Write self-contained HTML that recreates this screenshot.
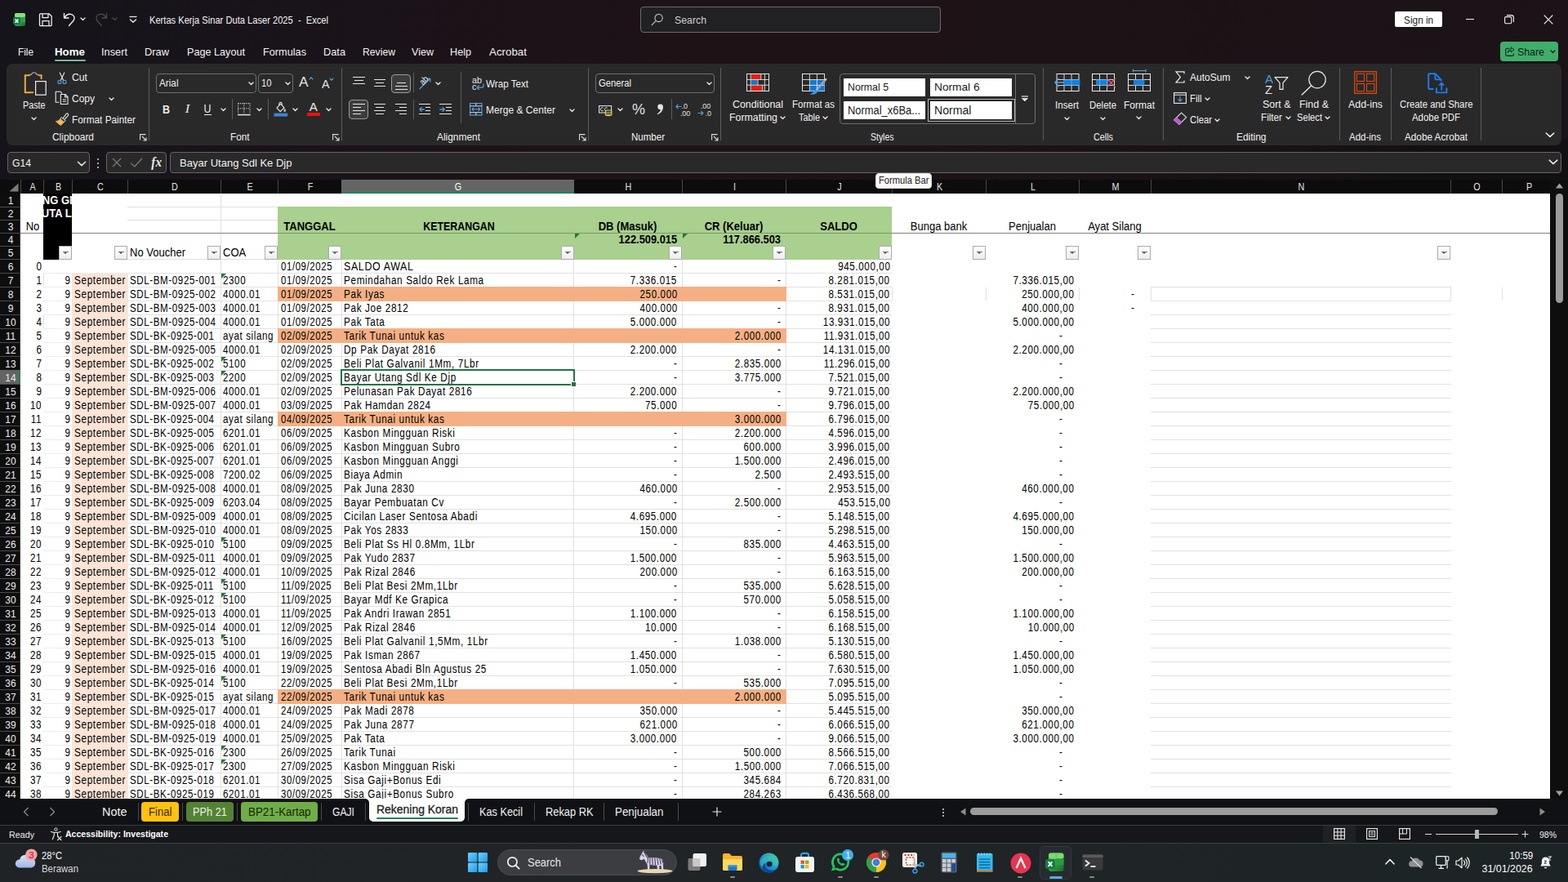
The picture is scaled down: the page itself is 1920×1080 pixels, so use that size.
<!DOCTYPE html>
<html lang="id"><head><meta charset="utf-8"><title>Kertas Kerja Sinar Duta Laser 2025 - Excel</title>
<style>
*{box-sizing:border-box;margin:0;padding:0}
html,body{width:1920px;height:1080px;overflow:hidden;background:#1b1317}
body{position:relative;font-family:'Liberation Sans',sans-serif;font-size:12px;color:#fff}
div,span.t,svg{position:absolute}
span.t{white-space:pre}
svg{overflow:visible}

#g{left:0;top:219px;width:1920px;height:759px;overflow:hidden}
#g div,#g span{position:absolute}
#g .r{left:0;width:1898px;height:17px;font:14px/17px 'Liberation Sans',sans-serif;color:#000;white-space:pre}
#g .r span{top:0;height:17px;letter-spacing:.74px;transform:scaleX(.84);transform-origin:0 0}
#g .r .rh{left:1px;width:24px;text-align:center;color:#ececec;font-size:12.5px;top:1px;letter-spacing:0;transform:scaleX(.96);transform-origin:50% 0}
#g .r .n{transform:scaleX(.83);transform-origin:100% 0}
#g .r .f{transform:scaleX(.815)}
#g .r .d{transform:scaleX(.826)}
#g .r .e{transform:scaleX(.827)}
.a{right:1846.6px}.b{right:1811.8px}.c{left:91.4px}.d{left:159.4px}.e{left:272.8px}.f{left:344.1px}.g{left:421px}
.h{right:1068.6px}.i{right:941.5px}.j{right:807.9px}.l{right:582.5px}.ld{right:596.5px}.m{right:508.3px}
.fb{width:16px;height:16.5px;border:1px solid #ababab;background:linear-gradient(#ffffff,#f6f6f6 55%,#ececec)}
.fb:after{content:"";position:absolute;left:4.5px;top:6.5px;border:2.6px solid transparent;border-top:2.8px solid #4a4a4a;border-bottom:0}
.fb:before{content:"";position:absolute;left:3.5px;top:5.6px;width:7px;height:1px;background:#777}
.tr{width:0;height:0;border-top:6px solid #217a3c;border-right:6px solid transparent}
.ct{height:17px;white-space:pre;font:14px/17px 'Liberation Sans',sans-serif;color:#000}
</style></head>
<body>
<div style="left:0px;top:0px;width:1920px;height:178px;background:linear-gradient(90deg,#15141a 0%,#19131a 18%,#1e1216 45%,#1d1216 70%,#1b1318 100%);"></div>
<div style="left:0px;top:170px;width:1920px;height:50px;background:linear-gradient(90deg,#16141a 0%,#1a1319 22%,#1e1318 42%,#1d1317 58%,#181215 78%,#131012 92%,#121012 100%);"></div>
<svg style="left:16px;top:16px;" width="16" height="16" viewBox="0 0 16 16"><defs><linearGradient id="xg" x1="0" y1="0" x2="1" y2="1"><stop offset="0" stop-color="#6fd66a"/><stop offset="1" stop-color="#0e6b2e"/></linearGradient></defs>
<rect x="2" y="0" width="13" height="16" rx="2.5" fill="url(#xg)"/><rect x="2" y="0" width="13" height="5" rx="2" fill="#8be07a"/><rect x="8" y="5" width="7" height="6" fill="#2fa34a"/>
<rect x="0" y="5" width="9" height="9" rx="1.8" fill="#107c41"/><path d="M2.6 7.4 L6.4 11.8 M6.4 7.4 L2.6 11.8" stroke="#fff" stroke-width="1.5"/></svg>
<svg style="left:48px;top:16px;" width="16" height="16" viewBox="0 0 16 16"><path d="M1.5 0.8h10.5l3.2 3.2v10.5a1 1 0 0 1-1 1h-12.7a1 1 0 0 1-1-1v-12.7a1 1 0 0 1 1-1z M4 0.8v4.7h7v-4.7 M4 15.5v-6h8v6" fill="none" stroke="#f2f2f2" stroke-width="1.25" stroke-linejoin="round"/></svg>
<svg style="left:77px;top:15px;" width="16" height="18" viewBox="0 0 16 18"><path d="M1.5 1.5v5.5h5.5 M1.8 6.8 C4 3.2 7.5 1.6 10.6 2.6 C14 3.8 15 7.2 13.2 10 L7.5 16.5" fill="none" stroke="#f2f2f2" stroke-width="1.35" stroke-linecap="round" stroke-linejoin="round"/></svg>
<svg style="left:97.0px;top:20.25px;" width="9.0" height="6.5" viewBox="0 0 9.0 6.5"><path d="M2 2 L4.5 4.5 L7.0 2" fill="none" stroke="#e0e0e0" stroke-width="1.4" stroke-linecap="round" stroke-linejoin="round"/></svg>
<svg style="left:116px;top:15px;" width="16" height="18" viewBox="0 0 16 18"><path d="M14.5 1.5v5.5h-5.5 M14.2 6.8 C12 3.2 8.5 1.6 5.4 2.6 C2 3.8 1 7.2 2.8 10 L8.5 16.5" fill="none" stroke="#4a474c" stroke-width="1.35" stroke-linecap="round" stroke-linejoin="round"/></svg>
<svg style="left:136.0px;top:20.25px;" width="9.0" height="6.5" viewBox="0 0 9.0 6.5"><path d="M2 2 L4.5 4.5 L7.0 2" fill="none" stroke="#4a474c" stroke-width="1.4" stroke-linecap="round" stroke-linejoin="round"/></svg>
<svg style="left:158px;top:19px;" width="10" height="10" viewBox="0 0 10 10"><path d="M0.5 1.5h9" stroke="#e8e8e8" stroke-width="1.3"/><path d="M1.5 5 L5 8.3 L8.5 5" fill="none" stroke="#e8e8e8" stroke-width="1.4" stroke-linecap="round" stroke-linejoin="round"/></svg>
<span class="t" style="left:183.00px;top:16.00px;font-size:12.5px;line-height:18px;color:#f4f4f4;transform:scaleX(0.8904);transform-origin:0 50%;">Kertas Kerja Sinar Duta Laser 2025  -  Excel</span>
<div style="left:784px;top:8px;width:368px;height:32px;background:#212022;border:1px solid #6c6a6c;border-radius:4px;"></div>
<svg style="left:797px;top:16px;" width="16" height="16" viewBox="0 0 16 16"><circle cx="9.6" cy="6" r="4.6" fill="none" stroke="#bdbdbd" stroke-width="1.2"/><path d="M6.3 9.4 L1.2 14.6" stroke="#bdbdbd" stroke-width="1.3" stroke-linecap="round"/></svg>
<span class="t" style="left:826.00px;top:16.00px;font-size:12.5px;line-height:18px;color:#d0d0d0;transform:scaleX(0.9846);transform-origin:0 50%;">Search</span>
<div style="left:1708px;top:14px;width:58px;height:19px;background:#ffffff;border-radius:2px;"></div>
<span class="t" style="left:1717.88px;top:15.60px;font-size:12.5px;line-height:18px;color:#1a1a1a;transform:scaleX(0.9416);transform-origin:50% 50%;">Sign in</span>
<div style="left:1795px;top:23px;width:10px;height:1px;background:#f0f0f0;"></div>
<svg style="left:1842px;top:18px;" width="12" height="12" viewBox="0 0 12 12"><rect x="0.6" y="2.6" width="8.2" height="8.2" rx="1.5" fill="none" stroke="#f0f0f0" stroke-width="1.1"/><path d="M3 0.6h5.5a2.9 2.9 0 0 1 2.9 2.9v5.5" fill="none" stroke="#f0f0f0" stroke-width="1.1"/></svg>
<svg style="left:1890px;top:18px;" width="12" height="12" viewBox="0 0 12 12"><path d="M0.7 0.7 L11.3 11.3 M11.3 0.7 L0.7 11.3" stroke="#f0f0f0" stroke-width="1.2"/></svg>
<span class="t" style="left:22.00px;top:53.50px;font-size:13.5px;line-height:19px;color:#f2f2f2;transform:scaleX(0.8729);transform-origin:0 50%;">File</span>
<span class="t" style="left:124.00px;top:53.50px;font-size:13.5px;line-height:19px;color:#f2f2f2;transform:scaleX(0.9477);transform-origin:0 50%;">Insert</span>
<span class="t" style="left:177.00px;top:53.50px;font-size:13.5px;line-height:19px;color:#f2f2f2;transform:scaleX(0.9519);transform-origin:0 50%;">Draw</span>
<span class="t" style="left:229.00px;top:53.50px;font-size:13.5px;line-height:19px;color:#f2f2f2;transform:scaleX(0.9365);transform-origin:0 50%;">Page Layout</span>
<span class="t" style="left:322.00px;top:53.50px;font-size:13.5px;line-height:19px;color:#f2f2f2;transform:scaleX(0.9420);transform-origin:0 50%;">Formulas</span>
<span class="t" style="left:396.00px;top:53.50px;font-size:13.5px;line-height:19px;color:#f2f2f2;transform:scaleX(0.9463);transform-origin:0 50%;">Data</span>
<span class="t" style="left:444.00px;top:53.50px;font-size:13.5px;line-height:19px;color:#f2f2f2;transform:scaleX(0.9036);transform-origin:0 50%;">Review</span>
<span class="t" style="left:504.00px;top:53.50px;font-size:13.5px;line-height:19px;color:#f2f2f2;transform:scaleX(0.9300);transform-origin:0 50%;">View</span>
<span class="t" style="left:551.00px;top:53.50px;font-size:13.5px;line-height:19px;color:#f2f2f2;transform:scaleX(0.9364);transform-origin:0 50%;">Help</span>
<span class="t" style="left:599.00px;top:53.50px;font-size:13.5px;line-height:19px;color:#f2f2f2;transform:scaleX(0.9886);transform-origin:0 50%;">Acrobat</span>
<span class="t" style="left:67.00px;top:53.50px;font-size:13.5px;line-height:19px;color:#ffffff;font-weight:700;transform:scaleX(0.9863);transform-origin:0 50%;">Home</span>
<div style="left:67px;top:73px;width:38px;height:2.2px;background:#6dbb97;border-radius:1px;"></div>
<div style="left:1837px;top:51px;width:71px;height:24px;background:#41ad6b;border-radius:4px;"></div>
<svg style="left:1843px;top:57px;" width="12" height="12" viewBox="0 0 12 12"><path d="M5 2.2H2.2a1.4 1.4 0 0 0-1.4 1.4v6.4a1.4 1.4 0 0 0 1.4 1.4h6.8a1.4 1.4 0 0 0 1.4-1.4V8.4" fill="none" stroke="#0c2414" stroke-width="1.1"/><path d="M7.6 0.9 L11 3.9 L7.6 6.9 V5 C5.4 5 4.2 5.9 3.4 7.6 C3.6 4.7 5 3 7.6 2.8Z" fill="none" stroke="#0c2414" stroke-width="1" stroke-linejoin="round"/></svg>
<span class="t" style="left:1858.00px;top:53.50px;font-size:13.5px;line-height:19px;color:#0c2414;transform:scaleX(0.9159);transform-origin:0 50%;">Share</span>
<svg style="left:1896.5px;top:60.25px;" width="9.0" height="6.5" viewBox="0 0 9.0 6.5"><path d="M2 2 L4.5 4.5 L7.0 2" fill="none" stroke="#0c2414" stroke-width="1.2" stroke-linecap="round" stroke-linejoin="round"/></svg>
<div style="left:8px;top:78px;width:1904px;height:100px;background:#292929;border-radius:8px;"></div>
<svg style="left:28px;top:86px;" width="30" height="33" viewBox="0 0 30 33"><path d="M8.5 6.5 V5.3h2a3.3 3.3 0 0 1 6.4 0h2V6.5" fill="none" stroke="#b9b9b9" stroke-width="1.1"/>
<path d="M8.3 6.2H2.8V27.2H13 M19.2 6.2H22.6V11" fill="none" stroke="#f3a73b" stroke-width="2"/>
<rect x="15.6" y="13.6" width="12.6" height="16.6" fill="#292929" stroke="#eeeeee" stroke-width="1.2"/></svg>
<span class="t" style="left:27.50px;top:120.00px;font-size:12.5px;line-height:18px;color:#f2f2f2;transform:scaleX(0.8602);transform-origin:0 50%;">Paste</span>
<svg style="left:36.5px;top:141.75px;" width="9.0" height="6.5" viewBox="0 0 9.0 6.5"><path d="M2 2 L4.5 4.5 L7.0 2" fill="none" stroke="#e6e6e6" stroke-width="1.4" stroke-linecap="round" stroke-linejoin="round"/></svg>
<svg style="left:69px;top:88px;" width="14" height="16" viewBox="0 0 14 16"><path d="M4.2 1 L8.6 10.3 M9.8 1 L5.4 10.3" stroke="#e8e8e8" stroke-width="1.1" stroke-linecap="round"/>
<circle cx="3.9" cy="12.4" r="2" fill="none" stroke="#4a9fe0" stroke-width="1.1"/><circle cx="10.1" cy="12.4" r="2" fill="none" stroke="#4a9fe0" stroke-width="1.1"/></svg>
<span class="t" style="left:88.00px;top:86.00px;font-size:12.5px;line-height:18px;color:#f2f2f2;transform:scaleX(0.9767);transform-origin:0 50%;">Cut</span>
<svg style="left:67px;top:111px;" width="18" height="18" viewBox="0 0 18 18"><path d="M5.3 14.3H1.2V1.2H6.8L9 3.4" fill="none" stroke="#e8e8e8" stroke-width="1.1" stroke-linejoin="round"/>
<path d="M7.3 4.5h5.6l3.1 3.1v8.9H7.3z M12.6 4.6v3.3h3.3" fill="none" stroke="#e8e8e8" stroke-width="1.1" stroke-linejoin="round"/>
<path d="M9.8 11h4 M9.8 13.3h4" stroke="#e8e8e8" stroke-width="1"/></svg>
<span class="t" style="left:88.00px;top:112.00px;font-size:12.5px;line-height:18px;color:#f2f2f2;transform:scaleX(0.9593);transform-origin:0 50%;">Copy</span>
<svg style="left:131.8px;top:117.75px;" width="9.0" height="6.5" viewBox="0 0 9.0 6.5"><path d="M2 2 L4.5 4.5 L7.0 2" fill="none" stroke="#e6e6e6" stroke-width="1.4" stroke-linecap="round" stroke-linejoin="round"/></svg>
<svg style="left:67px;top:138px;" width="18" height="17" viewBox="0 0 18 17"><path d="M10.3 6.6 L14.2 1.4 a1.5 1.5 0 0 1 2.3 1.9 L12.2 8.2" fill="none" stroke="#e8e8e8" stroke-width="1.1"/>
<path d="M8.2 5.6 L13.2 9.5 L11.4 11.6 L6.6 7.8Z" fill="#3a3a3a" stroke="#e8e8e8" stroke-width="1"/>
<path d="M6.3 8.2 L11 11.9 L7.3 15.6 L1.2 10.6 C3.4 10.4 5 9.6 6.3 8.2Z" fill="#f0bd4f" stroke="#f0bd4f" stroke-width="0.8" stroke-linejoin="round"/></svg>
<span class="t" style="left:88.00px;top:138.00px;font-size:12.5px;line-height:18px;color:#f2f2f2;transform:scaleX(0.9435);transform-origin:0 50%;">Format Painter</span>
<span class="t" style="left:64.00px;top:159.50px;font-size:12px;line-height:17px;color:#f2f2f2;transform:scaleX(0.9927);transform-origin:0 50%;">Clipboard</span>
<svg style="left:171px;top:164px;" width="9" height="9" viewBox="0 0 9 9"><path d="M7.5 0.6H0.6V7.5" fill="none" stroke="#dcdcdc" stroke-width="1.1"/><path d="M3 3 L8 8 M8 4.3V8H4.3" fill="none" stroke="#dcdcdc" stroke-width="1.1"/></svg>
<div style="left:182px;top:83px;width:1px;height:89px;background:#5c5c5c;"></div>
<div style="left:191px;top:90px;width:123px;height:24px;background:#292929;border:1px solid #6e6e6e;border-radius:4px;"></div>
<span class="t" style="left:194.50px;top:93.00px;font-size:12.5px;line-height:18px;color:#f2f2f2;transform:scaleX(0.9394);transform-origin:0 50%;">Arial</span>
<svg style="left:303.0px;top:99.25px;" width="9.0" height="6.5" viewBox="0 0 9.0 6.5"><path d="M2 2 L4.5 4.5 L7.0 2" fill="none" stroke="#e6e6e6" stroke-width="1.4" stroke-linecap="round" stroke-linejoin="round"/></svg>
<div style="left:316px;top:90px;width:43px;height:24px;background:#292929;border:1px solid #6e6e6e;border-radius:4px;"></div>
<span class="t" style="left:319.50px;top:93.00px;font-size:12.5px;line-height:18px;color:#f2f2f2;transform:scaleX(0.8989);transform-origin:0 50%;">10</span>
<svg style="left:348.0px;top:99.25px;" width="9.0" height="6.5" viewBox="0 0 9.0 6.5"><path d="M2 2 L4.5 4.5 L7.0 2" fill="none" stroke="#e6e6e6" stroke-width="1.4" stroke-linecap="round" stroke-linejoin="round"/></svg>
<span class="t" style="left:366.00px;top:89.00px;font-size:17px;line-height:24px;color:#e4e4e4;transform:scaleX(1.0138);transform-origin:0 50%;">A</span>
<svg style="left:378px;top:94px;" width="6" height="4" viewBox="0 0 6 4"><path d="M0.7 3.3 L3 0.9 L5.3 3.3" fill="none" stroke="#5aa7e6" stroke-width="1.1"/></svg>
<span class="t" style="left:394.00px;top:92.50px;font-size:14.5px;line-height:20px;color:#e4e4e4;transform:scaleX(0.9822);transform-origin:0 50%;">A</span>
<svg style="left:403px;top:95px;" width="6" height="4" viewBox="0 0 6 4"><path d="M0.7 0.8 L3 3.2 L5.3 0.8" fill="none" stroke="#5aa7e6" stroke-width="1.1"/></svg>
<span class="t" style="left:197.58px;top:123.00px;font-size:15px;line-height:21px;color:#ececec;font-weight:700;transform:scaleX(0.8300);transform-origin:50% 50%;">B</span>
<span class="t" style="left:226.50px;top:123.00px;font-size:15px;line-height:21px;color:#ececec;font-style:italic;font-family:'Liberation Serif',serif;transform:scaleX(1.1000);transform-origin:50% 50%;">I</span>
<span class="t" style="left:248.94px;top:122.50px;font-size:14px;line-height:20px;color:#ececec;transform:scaleX(0.8889);transform-origin:50% 50%;">U</span>
<div style="left:249.5px;top:139.5px;width:9.5px;height:1.2px;background:#ececec;"></div>
<svg style="left:268.8px;top:131.25px;" width="9.0" height="6.5" viewBox="0 0 9.0 6.5"><path d="M2 2 L4.5 4.5 L7.0 2" fill="none" stroke="#e6e6e6" stroke-width="1.4" stroke-linecap="round" stroke-linejoin="round"/></svg>
<div style="left:284px;top:121px;width:1px;height:25px;background:#5c5c5c;"></div>
<svg style="left:291px;top:126px;" width="16" height="16" viewBox="0 0 16 16"><path d="M0.6 0.6H15 M0.6 0.6V13 M15 0.6V13 M7.8 0.6V13 M0.6 6.8H15" fill="none" stroke="#dcdcdc" stroke-width="1.1" stroke-dasharray="1.1 1.3"/><path d="M0 14.6H15.6" stroke="#f0f0f0" stroke-width="1.4"/></svg>
<svg style="left:313.0px;top:131.25px;" width="9.0" height="6.5" viewBox="0 0 9.0 6.5"><path d="M2 2 L4.5 4.5 L7.0 2" fill="none" stroke="#e6e6e6" stroke-width="1.4" stroke-linecap="round" stroke-linejoin="round"/></svg>
<div style="left:328px;top:121px;width:1px;height:25px;background:#5c5c5c;"></div>
<svg style="left:335px;top:124px;" width="18" height="19" viewBox="0 0 18 19"><path d="M4 8.2 L8.6 3.2 L13 7.8 L8.2 12.6Z" fill="none" stroke="#e8e8e8" stroke-width="1.2" stroke-linejoin="round"/><path d="M6.9 4.9 C6.4 2.6 7.3 1.2 8.6 1.2 C9.8 1.2 10.3 2.4 10.2 4.6" fill="none" stroke="#e8e8e8" stroke-width="1.1"/><path d="M13.6 8.6c1 1.6 1.4 2.5 1.4 3.2a1.3 1.3 0 0 1-2.6 0c0-.8.4-1.7 1.2-3.2z" fill="#bdbdbd"/><rect x="0.4" y="14.6" width="16.8" height="4" fill="#3b86d6"/></svg>
<svg style="left:356.8px;top:131.25px;" width="9.0" height="6.5" viewBox="0 0 9.0 6.5"><path d="M2 2 L4.5 4.5 L7.0 2" fill="none" stroke="#e6e6e6" stroke-width="1.4" stroke-linecap="round" stroke-linejoin="round"/></svg>
<span class="t" style="left:379.36px;top:121.00px;font-size:14.5px;line-height:20px;color:#ececec;transform:scaleX(1.0339);transform-origin:50% 50%;">A</span>
<div style="left:376px;top:138.3px;width:16px;height:4px;background:#ee1111;"></div>
<svg style="left:398.0px;top:131.25px;" width="9.0" height="6.5" viewBox="0 0 9.0 6.5"><path d="M2 2 L4.5 4.5 L7.0 2" fill="none" stroke="#e6e6e6" stroke-width="1.4" stroke-linecap="round" stroke-linejoin="round"/></svg>
<span class="t" style="left:281.50px;top:159.50px;font-size:12px;line-height:17px;color:#f2f2f2;transform:scaleX(0.9785);transform-origin:0 50%;">Font</span>
<svg style="left:407px;top:164px;" width="9" height="9" viewBox="0 0 9 9"><path d="M7.5 0.6H0.6V7.5" fill="none" stroke="#dcdcdc" stroke-width="1.1"/><path d="M3 3 L8 8 M8 4.3V8H4.3" fill="none" stroke="#dcdcdc" stroke-width="1.1"/></svg>
<div style="left:418px;top:83px;width:1px;height:89px;background:#5c5c5c;"></div>
<div style="left:432px;top:94px;width:14.5px;height:1.2px;background:#e6e6e6;"></div>
<div style="left:434px;top:98px;width:10.5px;height:1.2px;background:#e6e6e6;"></div>
<div style="left:432px;top:102px;width:14.5px;height:1.2px;background:#e6e6e6;"></div>
<div style="left:457.5px;top:97px;width:14.5px;height:1.2px;background:#e6e6e6;"></div>
<div style="left:459.5px;top:101px;width:10.5px;height:1.2px;background:#e6e6e6;"></div>
<div style="left:457.5px;top:105px;width:14.5px;height:1.2px;background:#e6e6e6;"></div>
<div style="left:479px;top:90.5px;width:24px;height:23.5px;background:#3d3d3d;border:1px solid #9a9a9a;border-radius:4px;"></div>
<div style="left:486px;top:101px;width:10.5px;height:1.2px;background:#e6e6e6;"></div>
<div style="left:484px;top:105px;width:14.5px;height:1.2px;background:#e6e6e6;"></div>
<div style="left:484px;top:109px;width:14.5px;height:1.2px;background:#e6e6e6;"></div>
<div style="left:505.5px;top:89px;width:1px;height:24px;background:#5c5c5c;"></div>
<svg style="left:511px;top:92px;" width="18" height="19" viewBox="0 0 18 19"><path d="M2.5 17 L15.5 4.5 M15.8 4.2h-4.4 M15.8 4.2v4.4" fill="none" stroke="#4a9fe0" stroke-width="1.3"/></svg>
<span class="t" style="left:512.88px;top:91.00px;font-size:11px;line-height:15px;color:#e8e8e8;transform:scaleX(0.8500);transform-origin:50% 50%;transform:rotate(-45deg) scaleX(0.85);transform-origin:50% 50%;">ab</span>
<svg style="left:532.0px;top:99.25px;" width="9.0" height="6.5" viewBox="0 0 9.0 6.5"><path d="M2 2 L4.5 4.5 L7.0 2" fill="none" stroke="#e6e6e6" stroke-width="1.4" stroke-linecap="round" stroke-linejoin="round"/></svg>
<div style="left:427px;top:122px;width:24px;height:23.5px;background:#3d3d3d;border:1px solid #9a9a9a;border-radius:4px;"></div>
<div style="left:432px;top:127px;width:14.5px;height:1.2px;background:#e6e6e6;"></div>
<div style="left:432px;top:131px;width:9.5px;height:1.2px;background:#e6e6e6;"></div>
<div style="left:432px;top:135px;width:14.5px;height:1.2px;background:#e6e6e6;"></div>
<div style="left:432px;top:139px;width:9.5px;height:1.2px;background:#e6e6e6;"></div>
<div style="left:457.5px;top:127px;width:14.5px;height:1.2px;background:#e6e6e6;"></div>
<div style="left:459.5px;top:131px;width:10.5px;height:1.2px;background:#e6e6e6;"></div>
<div style="left:457.5px;top:135px;width:14.5px;height:1.2px;background:#e6e6e6;"></div>
<div style="left:459.5px;top:139px;width:10.5px;height:1.2px;background:#e6e6e6;"></div>
<div style="left:483.5px;top:127px;width:14.5px;height:1.2px;background:#e6e6e6;"></div>
<div style="left:488.5px;top:131px;width:9.5px;height:1.2px;background:#e6e6e6;"></div>
<div style="left:483.5px;top:135px;width:14.5px;height:1.2px;background:#e6e6e6;"></div>
<div style="left:488.5px;top:139px;width:9.5px;height:1.2px;background:#e6e6e6;"></div>
<div style="left:505.5px;top:122px;width:1px;height:24px;background:#5c5c5c;"></div>
<div style="left:512.5px;top:127px;width:14.5px;height:1.2px;background:#e6e6e6;"></div>
<div style="left:512.5px;top:139px;width:14.5px;height:1.2px;background:#e6e6e6;"></div>
<div style="left:520.5px;top:131px;width:6.5px;height:1.2px;background:#e6e6e6;"></div>
<div style="left:520.5px;top:135px;width:6.5px;height:1.2px;background:#e6e6e6;"></div>
<svg style="left:512.5px;top:129.5px;" width="8" height="8" viewBox="0 0 8 8"><path d="M6.8 4H1 M3.4 1.4 L0.9 4 L3.4 6.6" fill="none" stroke="#4a9fe0" stroke-width="1.3" stroke-linejoin="round"/></svg>
<div style="left:538px;top:127px;width:14.5px;height:1.2px;background:#e6e6e6;"></div>
<div style="left:538px;top:139px;width:14.5px;height:1.2px;background:#e6e6e6;"></div>
<div style="left:546px;top:131px;width:6.5px;height:1.2px;background:#e6e6e6;"></div>
<div style="left:546px;top:135px;width:6.5px;height:1.2px;background:#e6e6e6;"></div>
<svg style="left:538px;top:129.5px;" width="8" height="8" viewBox="0 0 8 8"><path d="M0.4 4H6.2 M3.8 1.4 L6.3 4 L3.8 6.6" fill="none" stroke="#4a9fe0" stroke-width="1.3" stroke-linejoin="round"/></svg>
<div style="left:564px;top:88px;width:1px;height:63px;background:#5c5c5c;"></div>
<span class="t" style="left:578.00px;top:90.50px;font-size:10.5px;line-height:15px;color:#e8e8e8;transform:scaleX(1.0267);transform-origin:0 50%;">ab</span>
<span class="t" style="left:578.00px;top:99.00px;font-size:10.5px;line-height:15px;color:#e8e8e8;transform:scaleX(1.0476);transform-origin:0 50%;">c</span>
<svg style="left:583px;top:102px;" width="10" height="9" viewBox="0 0 10 9"><path d="M9 0.5v2.6a2 2 0 0 1-2 2H1.2 M3.8 2.2 L1 5.1 L3.8 8" fill="none" stroke="#4a9fe0" stroke-width="1.3" stroke-linejoin="round"/></svg>
<span class="t" style="left:595.00px;top:94.00px;font-size:12.5px;line-height:18px;color:#f2f2f2;transform:scaleX(0.9317);transform-origin:0 50%;">Wrap Text</span>
<svg style="left:575px;top:126px;" width="16" height="16" viewBox="0 0 16 16"><rect x="0.6" y="0.6" width="14.4" height="14.4" fill="none" stroke="#5aa7e6" stroke-width="1.1"/><path d="M0.6 3.9H15 M0.6 11.7H15 M7.8 0.6V3.9 M7.8 11.7V15" stroke="#cfe3f5" stroke-width="1"/><path d="M3 7.8H12.6 M5 5.8 L3 7.8 L5 9.8 M10.6 5.8 L12.6 7.8 L10.6 9.8" fill="none" stroke="#5aa7e6" stroke-width="1.1"/></svg>
<span class="t" style="left:595.00px;top:126.00px;font-size:12.5px;line-height:18px;color:#f2f2f2;transform:scaleX(0.9633);transform-origin:0 50%;">Merge &amp; Center</span>
<svg style="left:695.8px;top:131.75px;" width="9.0" height="6.5" viewBox="0 0 9.0 6.5"><path d="M2 2 L4.5 4.5 L7.0 2" fill="none" stroke="#e6e6e6" stroke-width="1.4" stroke-linecap="round" stroke-linejoin="round"/></svg>
<span class="t" style="left:535.00px;top:159.50px;font-size:12px;line-height:17px;color:#f2f2f2;transform:scaleX(0.9930);transform-origin:0 50%;">Alignment</span>
<svg style="left:709px;top:164px;" width="9" height="9" viewBox="0 0 9 9"><path d="M7.5 0.6H0.6V7.5" fill="none" stroke="#dcdcdc" stroke-width="1.1"/><path d="M3 3 L8 8 M8 4.3V8H4.3" fill="none" stroke="#dcdcdc" stroke-width="1.1"/></svg>
<div style="left:720px;top:83px;width:1px;height:89px;background:#5c5c5c;"></div>
<div style="left:729px;top:90px;width:146px;height:24px;background:#292929;border:1px solid #6e6e6e;border-radius:4px;"></div>
<span class="t" style="left:732.50px;top:93.00px;font-size:12.5px;line-height:18px;color:#f2f2f2;transform:scaleX(0.8992);transform-origin:0 50%;">General</span>
<svg style="left:863.5px;top:99.25px;" width="9.0" height="6.5" viewBox="0 0 9.0 6.5"><path d="M2 2 L4.5 4.5 L7.0 2" fill="none" stroke="#e6e6e6" stroke-width="1.4" stroke-linecap="round" stroke-linejoin="round"/></svg>
<svg style="left:733px;top:129px;" width="17" height="14" viewBox="0 0 17 14"><rect x="0.6" y="0.6" width="15" height="8.4" fill="none" stroke="#e0e0e0" stroke-width="1.1"/><path d="M5.6 3.2a2 2 0 1 0 0 3.2 M10.6 3.2a2 2 0 1 0 0 3.2" fill="none" stroke="#e0e0e0" stroke-width="1"/>
<path d="M8.4 6.8c0-1.1 7.4-1.1 7.4 0v5c0 1.1-7.4 1.1-7.4 0z" fill="#292929" stroke="#ecd66a" stroke-width="1.1"/><path d="M8.4 8.2c0 1 7.4 1 7.4 0 M8.4 10.4c0 1 7.4 1 7.4 0" fill="none" stroke="#ecd66a" stroke-width="1"/></svg>
<svg style="left:754.8px;top:131.25px;" width="9.0" height="6.5" viewBox="0 0 9.0 6.5"><path d="M2 2 L4.5 4.5 L7.0 2" fill="none" stroke="#e6e6e6" stroke-width="1.4" stroke-linecap="round" stroke-linejoin="round"/></svg>
<span class="t" style="left:773.99px;top:122.00px;font-size:18px;line-height:25px;color:#e0e0e0;">%</span>
<svg style="left:804px;top:127px;" width="9" height="14" viewBox="0 0 9 14"><path d="M4.6 0.6a3.4 3.4 0 0 1 3.4 3.5c0 4.1-2.6 7.6-6.6 9.1l-.5-1c2.4-1.3 3.8-3 4-5.1A3.4 3.4 0 0 1 1.2 4 3.4 3.4 0 0 1 4.6.6z" fill="#e4e4e4"/></svg>
<div style="left:822px;top:121px;width:1px;height:25px;background:#5c5c5c;"></div>
<span class="t" style="left:833.56px;top:123.00px;font-size:9.5px;line-height:13px;color:#e0e0e0;transform:scaleX(0.9500);transform-origin:100% 50%;">.0</span>
<span class="t" style="left:831.78px;top:131.50px;font-size:9.5px;line-height:13px;color:#e0e0e0;transform:scaleX(0.9500);transform-origin:100% 50%;">.00</span>
<svg style="left:827px;top:126.5px;" width="8" height="7" viewBox="0 0 8 7"><path d="M7.4 3.5H1 M3.4 1 L0.9 3.5 L3.4 6" fill="none" stroke="#4a9fe0" stroke-width="1.2"/></svg>
<span class="t" style="left:857.28px;top:123.00px;font-size:9.5px;line-height:13px;color:#e0e0e0;transform:scaleX(0.9500);transform-origin:100% 50%;">.00</span>
<span class="t" style="left:862.56px;top:131.50px;font-size:9.5px;line-height:13px;color:#e0e0e0;transform:scaleX(0.9500);transform-origin:100% 50%;">.0</span>
<svg style="left:853.5px;top:135px;" width="8" height="7" viewBox="0 0 8 7"><path d="M0.4 3.5H6.8 M4.4 1 L6.9 3.5 L4.4 6" fill="none" stroke="#4a9fe0" stroke-width="1.2"/></svg>
<span class="t" style="left:773.00px;top:159.50px;font-size:12px;line-height:17px;color:#f2f2f2;transform:scaleX(0.9605);transform-origin:0 50%;">Number</span>
<svg style="left:870.5px;top:164px;" width="9" height="9" viewBox="0 0 9 9"><path d="M7.5 0.6H0.6V7.5" fill="none" stroke="#dcdcdc" stroke-width="1.1"/><path d="M3 3 L8 8 M8 4.3V8H4.3" fill="none" stroke="#dcdcdc" stroke-width="1.1"/></svg>
<div style="left:882px;top:83px;width:1px;height:89px;background:#5c5c5c;"></div>
<svg style="left:914px;top:90px;" width="28" height="22" viewBox="0 0 28 22"><rect x="0.5" y="0.5" width="27" height="21" fill="#292929" stroke="#e4e4e4" stroke-width="1"/>
<rect x="5.6" y="1" width="12" height="6.3" fill="#ea1c14"/><rect x="5.6" y="7.8" width="8" height="6" fill="#1279d2"/><rect x="5.6" y="14.4" width="14" height="6.6" fill="#ea1c14"/>
<path d="M5.2 0.5V21.5 M22.4 0.5V21.5 M0.5 7.5H27.5 M0.5 14.2H27.5 M14 7.5v7 M17.8 0.5v7 M19.8 14.2v7" stroke="#e4e4e4" stroke-width="0.9" fill="none"/></svg>
<span class="t" style="left:897.00px;top:119.00px;font-size:12.5px;line-height:18px;color:#f2f2f2;transform:scaleX(0.9913);transform-origin:0 50%;">Conditional</span>
<span class="t" style="left:893.00px;top:135.00px;font-size:12.5px;line-height:18px;color:#f2f2f2;transform:scaleX(0.9874);transform-origin:0 50%;">Formatting</span>
<svg style="left:954.0px;top:141.25px;" width="9.0" height="6.5" viewBox="0 0 9.0 6.5"><path d="M2 2 L4.5 4.5 L7.0 2" fill="none" stroke="#e6e6e6" stroke-width="1.4" stroke-linecap="round" stroke-linejoin="round"/></svg>
<svg style="left:982px;top:90px;" width="32" height="30" viewBox="0 0 32 30"><rect x="0.5" y="0.5" width="27" height="21" fill="#292929" stroke="#e4e4e4" stroke-width="1"/>
<rect x="9.6" y="7.8" width="18" height="13.4" fill="#1279d2"/>
<path d="M9.4 0.5V21.5 M18.4 0.5V21.5 M0.5 7.5H27.5 M0.5 14.4H27.5" stroke="#e4e4e4" stroke-width="0.9"/>
<path d="M29.3 7.2 L17.6 20.6" stroke="#d9d9d9" stroke-width="2.2" stroke-linecap="round"/><path d="M28.6 8.2 L19 19.2" stroke="#8a5a3a" stroke-width="1" />
<path d="M17.8 19.4 L19.6 21.4 C18.6 24.6 14.4 26.6 9.8 25.4 C12.6 24.2 14.4 21.6 17.8 19.4Z" fill="#3a96e8"/></svg>
<span class="t" style="left:970.00px;top:119.00px;font-size:12.5px;line-height:18px;color:#f2f2f2;transform:scaleX(0.9242);transform-origin:0 50%;">Format as</span>
<span class="t" style="left:978.00px;top:135.00px;font-size:12.5px;line-height:18px;color:#f2f2f2;transform:scaleX(0.8698);transform-origin:0 50%;">Table</span>
<svg style="left:1006.0px;top:141.25px;" width="9.0" height="6.5" viewBox="0 0 9.0 6.5"><path d="M2 2 L4.5 4.5 L7.0 2" fill="none" stroke="#e6e6e6" stroke-width="1.4" stroke-linecap="round" stroke-linejoin="round"/></svg>
<div style="left:1028px;top:90px;width:239.5px;height:62px;background:#292929;border:1px solid #6e6e6e;border-radius:4px;"></div>
<div style="left:1243px;top:90px;width:1px;height:62px;background:#6e6e6e;"></div>
<div style="left:1033px;top:96px;width:100px;height:22px;background:#ffffff;"></div>
<div style="left:1139px;top:96px;width:100px;height:22px;background:#ffffff;"></div>
<div style="left:1033px;top:124px;width:100px;height:22px;background:#ffffff;"></div>
<div style="left:1136px;top:121px;width:106.5px;height:28px;background:#2b2b2b;border:1px solid #b0b0b0;"></div>
<div style="left:1139px;top:124px;width:100px;height:22px;background:#ffffff;"></div>
<span class="t" style="left:1037.50px;top:98.00px;font-size:12.5px;line-height:18px;color:#1a1a1a;transform:scaleX(0.9858);transform-origin:0 50%;">Normal 5</span>
<span class="t" style="left:1143.50px;top:97.00px;font-size:13.5px;line-height:19px;color:#1a1a1a;transform:scaleX(1.0134);transform-origin:0 50%;">Normal 6</span>
<span class="t" style="left:1037.50px;top:124.50px;font-size:14px;line-height:20px;color:#1a1a1a;transform:scaleX(0.9224);transform-origin:0 50%;">Normal_x6Ba...</span>
<span class="t" style="left:1143.50px;top:124.50px;font-size:14px;line-height:20px;color:#1a1a1a;transform:scaleX(1.0083);transform-origin:0 50%;">Normal</span>
<svg style="left:1250px;top:116.5px;" width="10" height="8" viewBox="0 0 10 8"><path d="M0.8 1H9" stroke="#e8e8e8" stroke-width="1.2"/><path d="M1.4 3.6 L4.9 6.8 L8.4 3.6Z" fill="#e8e8e8" stroke="#e8e8e8" stroke-width="0.8" stroke-linejoin="round"/></svg>
<span class="t" style="left:1066.00px;top:159.50px;font-size:12px;line-height:17px;color:#f2f2f2;transform:scaleX(0.8719);transform-origin:0 50%;">Styles</span>
<div style="left:1277px;top:83px;width:1px;height:89px;background:#5c5c5c;"></div>
<svg style="left:1291px;top:90px;" width="32" height="22" viewBox="0 0 32 22"><g transform="translate(2.5,0)"><rect x="0.5" y="0.5" width="27" height="21" fill="none" stroke="#ededed" stroke-width="1"/><path d="M9.5 0.5V21.5 M18.5 0.5V21.5 M0.5 7.5H27.5 M0.5 14.5H27.5" stroke="#ededed" stroke-width="0.9"/><rect x="9" y="7.6" width="20" height="6.8" fill="#1581e0"/><path d="M18.5 7.5v7" stroke="#5db0f5" stroke-width="0.8"/></g>
<path d="M12 11H1.2 M5.6 6 L0.9 11 L5.6 16" fill="none" stroke="#5aa7e6" stroke-width="1.3"/></svg>
<span class="t" style="left:1292.00px;top:120.00px;font-size:12.5px;line-height:18px;color:#f2f2f2;transform:scaleX(0.9275);transform-origin:0 50%;">Insert</span>
<svg style="left:1301.8px;top:141.75px;" width="9.0" height="6.5" viewBox="0 0 9.0 6.5"><path d="M2 2 L4.5 4.5 L7.0 2" fill="none" stroke="#e6e6e6" stroke-width="1.4" stroke-linecap="round" stroke-linejoin="round"/></svg>
<svg style="left:1337px;top:90px;" width="32" height="22" viewBox="0 0 32 22"><rect x="0.5" y="0.5" width="27" height="21" fill="none" stroke="#ededed" stroke-width="1"/><path d="M9.5 0.5V21.5 M18.5 0.5V21.5 M0.5 7.5H27.5 M0.5 14.5H27.5" stroke="#ededed" stroke-width="0.9"/><rect x="5" y="7.6" width="15" height="6.8" fill="#1581e0"/><path d="M9.5 7.5v7 M18.5 7.5v7" stroke="#5db0f5" stroke-width="0.8"/>
<path d="M18.2 6 L28.8 17 M28.8 6 L18.2 17" stroke="#e8566e" stroke-width="1.3"/></svg>
<span class="t" style="left:1334.00px;top:120.00px;font-size:12.5px;line-height:18px;color:#f2f2f2;transform:scaleX(0.9131);transform-origin:0 50%;">Delete</span>
<svg style="left:1345.8px;top:141.75px;" width="9.0" height="6.5" viewBox="0 0 9.0 6.5"><path d="M2 2 L4.5 4.5 L7.0 2" fill="none" stroke="#e6e6e6" stroke-width="1.4" stroke-linecap="round" stroke-linejoin="round"/></svg>
<svg style="left:1381px;top:84px;" width="30" height="28" viewBox="0 0 30 28"><path d="M6.5 2.6H22 M6.5 0.6V4.6 M22 0.6V4.6" stroke="#5aa7e6" stroke-width="1" fill="none"/><g transform="translate(0,6)"><rect x="0.5" y="0.5" width="27" height="21" fill="none" stroke="#ededed" stroke-width="1"/><path d="M9.5 0.5V21.5 M18.5 0.5V21.5 M0.5 7.5H27.5 M0.5 14.5H27.5" stroke="#ededed" stroke-width="0.9"/><rect x="7" y="7.6" width="13.4" height="6.8" fill="#1581e0"/></g></svg>
<span class="t" style="left:1376.00px;top:119.50px;font-size:12.5px;line-height:18px;color:#f2f2f2;transform:scaleX(0.9597);transform-origin:0 50%;">Format</span>
<svg style="left:1389.8px;top:140.75px;" width="9.0" height="6.5" viewBox="0 0 9.0 6.5"><path d="M2 2 L4.5 4.5 L7.0 2" fill="none" stroke="#e6e6e6" stroke-width="1.4" stroke-linecap="round" stroke-linejoin="round"/></svg>
<span class="t" style="left:1339.00px;top:159.50px;font-size:12px;line-height:17px;color:#f2f2f2;transform:scaleX(0.8998);transform-origin:0 50%;">Cells</span>
<div style="left:1424px;top:83px;width:1px;height:89px;background:#5c5c5c;"></div>
<svg style="left:1439px;top:87px;" width="12" height="15" viewBox="0 0 12 15"><path d="M11 3.2V0.8H1L6.4 7.4 L1 14H11V11.6" fill="none" stroke="#ececec" stroke-width="1.2" stroke-linejoin="miter"/></svg>
<span class="t" style="left:1457.00px;top:86.00px;font-size:12.5px;line-height:18px;color:#f2f2f2;transform:scaleX(0.9626);transform-origin:0 50%;">AutoSum</span>
<svg style="left:1523.0px;top:92.25px;" width="9.0" height="6.5" viewBox="0 0 9.0 6.5"><path d="M2 2 L4.5 4.5 L7.0 2" fill="none" stroke="#e6e6e6" stroke-width="1.4" stroke-linecap="round" stroke-linejoin="round"/></svg>
<svg style="left:1437px;top:113px;" width="16" height="14" viewBox="0 0 16 14"><rect x="0.6" y="0.6" width="14.8" height="12.8" fill="none" stroke="#ececec" stroke-width="1.1"/><path d="M0.6 3.2H15.4" stroke="#ececec" stroke-width="1"/><path d="M8 5v6 M5.4 8.4 L8 11 L10.6 8.4" fill="none" stroke="#4a9fe0" stroke-width="1.2"/></svg>
<span class="t" style="left:1457.00px;top:111.50px;font-size:12.5px;line-height:18px;color:#f2f2f2;transform:scaleX(0.9080);transform-origin:0 50%;">Fill</span>
<svg style="left:1473.8px;top:117.75px;" width="9.0" height="6.5" viewBox="0 0 9.0 6.5"><path d="M2 2 L4.5 4.5 L7.0 2" fill="none" stroke="#e6e6e6" stroke-width="1.4" stroke-linecap="round" stroke-linejoin="round"/></svg>
<svg style="left:1436px;top:137px;" width="18" height="17" viewBox="0 0 18 17"><path d="M10.6 1.2 L16.6 6.6 L8 15.4 L1.6 9.8Z" fill="none" stroke="#e4e4e4" stroke-width="1.1" stroke-linejoin="round"/><path d="M4.8 7 L11 12.4 L8 15.4 L1.6 9.8Z" fill="#b75cd0" stroke="#c76ce0" stroke-width="1" stroke-linejoin="round"/></svg>
<span class="t" style="left:1457.00px;top:138.00px;font-size:12.5px;line-height:18px;color:#f2f2f2;transform:scaleX(0.9038);transform-origin:0 50%;">Clear</span>
<svg style="left:1486.0px;top:144.25px;" width="9.0" height="6.5" viewBox="0 0 9.0 6.5"><path d="M2 2 L4.5 4.5 L7.0 2" fill="none" stroke="#e6e6e6" stroke-width="1.4" stroke-linecap="round" stroke-linejoin="round"/></svg>
<span class="t" style="left:1548.99px;top:85.50px;font-size:15px;line-height:21px;color:#4a9fe0;">A</span>
<span class="t" style="left:1548.91px;top:98.50px;font-size:15px;line-height:21px;color:#ececec;transform:scaleX(0.9813);transform-origin:50% 50%;">Z</span>
<svg style="left:1560px;top:93px;" width="18" height="18" viewBox="0 0 18 18"><path d="M1 1.6H17 L11 8.4V16.4H7V8.4Z" fill="none" stroke="#ececec" stroke-width="1.2" stroke-linejoin="round"/></svg>
<span class="t" style="left:1545.50px;top:119.00px;font-size:12.5px;line-height:18px;color:#f2f2f2;transform:scaleX(0.9928);transform-origin:0 50%;">Sort &amp;</span>
<span class="t" style="left:1544.00px;top:135.00px;font-size:12.5px;line-height:18px;color:#f2f2f2;transform:scaleX(0.9359);transform-origin:0 50%;">Filter</span>
<svg style="left:1572.5px;top:141.25px;" width="9.0" height="6.5" viewBox="0 0 9.0 6.5"><path d="M2 2 L4.5 4.5 L7.0 2" fill="none" stroke="#e6e6e6" stroke-width="1.4" stroke-linecap="round" stroke-linejoin="round"/></svg>
<svg style="left:1593px;top:86px;" width="32" height="32" viewBox="0 0 32 32"><circle cx="20" cy="11.6" r="10.2" fill="none" stroke="#ececec" stroke-width="1.2"/><path d="M12.6 19 L1.2 30" stroke="#ececec" stroke-width="1.3" stroke-linecap="round"/></svg>
<span class="t" style="left:1591.00px;top:119.00px;font-size:12.5px;line-height:18px;color:#f2f2f2;transform:scaleX(0.9961);transform-origin:0 50%;">Find &amp;</span>
<span class="t" style="left:1588.00px;top:135.00px;font-size:12.5px;line-height:18px;color:#f2f2f2;transform:scaleX(0.8921);transform-origin:0 50%;">Select</span>
<svg style="left:1621.0px;top:141.25px;" width="9.0" height="6.5" viewBox="0 0 9.0 6.5"><path d="M2 2 L4.5 4.5 L7.0 2" fill="none" stroke="#e6e6e6" stroke-width="1.4" stroke-linecap="round" stroke-linejoin="round"/></svg>
<span class="t" style="left:1514.00px;top:159.50px;font-size:12px;line-height:17px;color:#f2f2f2;transform:scaleX(0.9945);transform-origin:0 50%;">Editing</span>
<div style="left:1640px;top:83px;width:1px;height:89px;background:#5c5c5c;"></div>
<svg style="left:1658px;top:87px;" width="28" height="28" viewBox="0 0 28 28"><rect x="0.7" y="0.7" width="26.6" height="26.6" fill="none" stroke="#d9480f" stroke-width="1.3"/>
<rect x="3.3" y="3.3" width="9.2" height="9.2" fill="none" stroke="#d9480f" stroke-width="1.1"/><rect x="15.5" y="3.3" width="9.2" height="9.2" fill="none" stroke="#d9480f" stroke-width="1.1"/>
<rect x="3.3" y="15.5" width="9.2" height="9.2" fill="none" stroke="#d9480f" stroke-width="1.1"/><rect x="15.5" y="15.5" width="9.2" height="9.2" fill="none" stroke="#d9480f" stroke-width="1.1"/></svg>
<span class="t" style="left:1651.00px;top:119.00px;font-size:12.5px;line-height:18px;color:#f2f2f2;transform:scaleX(0.9908);transform-origin:0 50%;">Add-ins</span>
<span class="t" style="left:1652.00px;top:159.50px;font-size:12px;line-height:17px;color:#f2f2f2;transform:scaleX(0.9585);transform-origin:0 50%;">Add-ins</span>
<div style="left:1703px;top:83px;width:1px;height:89px;background:#5c5c5c;"></div>
<svg style="left:1748px;top:89px;" width="26" height="27" viewBox="0 0 26 27"><path d="M9.4 1.2H2.2a1 1 0 0 0-1 1V19a1 1 0 0 0 1 1H7.5 M9.4 1.2 L16.4 8.4 V10.5 M9.4 1.2V7.4a1 1 0 0 0 1 1H16" fill="none" stroke="#1c7df2" stroke-width="1.9" stroke-linejoin="round"/>
<path d="M11 18.4V24.4H23.4V18.4" fill="none" stroke="#1c7df2" stroke-width="1.9"/><path d="M17.2 21.4V12.8 M14.2 15.6 L17.2 12.6 L20.2 15.6" fill="none" stroke="#1c7df2" stroke-width="1.9"/></svg>
<span class="t" style="left:1714.00px;top:119.00px;font-size:12.5px;line-height:18px;color:#f2f2f2;transform:scaleX(0.9069);transform-origin:0 50%;">Create and Share</span>
<span class="t" style="left:1729.00px;top:135.00px;font-size:12.5px;line-height:18px;color:#f2f2f2;transform:scaleX(0.9130);transform-origin:0 50%;">Adobe PDF</span>
<span class="t" style="left:1720.00px;top:159.50px;font-size:12px;line-height:17px;color:#f2f2f2;transform:scaleX(0.9780);transform-origin:0 50%;">Adobe Acrobat</span>
<div style="left:1813px;top:83px;width:1px;height:89px;background:#5c5c5c;"></div>
<svg style="left:1892px;top:161.5px;" width="12" height="7" viewBox="0 0 12 7"><path d="M1.2 1 L6 5.4 L10.8 1" fill="none" stroke="#ececec" stroke-width="1.6" stroke-linecap="round" stroke-linejoin="round"/></svg>
<div style="left:8.5px;top:186px;width:101.5px;height:26px;background:#292929;border:1px solid #696365;border-radius:4px;"></div>
<span class="t" style="left:15.00px;top:190.00px;font-size:13.5px;line-height:19px;color:#f2f2f2;transform:scaleX(0.9009);transform-origin:0 50%;">G14</span>
<svg style="left:94px;top:196.5px;" width="12" height="8" viewBox="0 0 12 8"><path d="M1.4 1.2 L6 5.6 L10.6 1.2" fill="none" stroke="#e8e8e8" stroke-width="1.5" stroke-linecap="round" stroke-linejoin="round"/></svg>
<div style="left:119px;top:193.8px;width:2px;height:2px;background:#d8d8d8;border-radius:1px;"></div>
<div style="left:119px;top:198.8px;width:2px;height:2px;background:#d8d8d8;border-radius:1px;"></div>
<div style="left:119px;top:203.8px;width:2px;height:2px;background:#d8d8d8;border-radius:1px;"></div>
<div style="left:130px;top:186px;width:74px;height:26px;background:#292929;border:1px solid #696365;border-radius:4px;"></div>
<svg style="left:137px;top:193px;" width="12" height="12" viewBox="0 0 12 12"><path d="M1 1 L11 11 M11 1 L1 11" stroke="#7d7d7d" stroke-width="1.2"/></svg>
<svg style="left:159px;top:193px;" width="16" height="12" viewBox="0 0 16 12"><path d="M1 6.6 L5.8 11 L15 1" fill="none" stroke="#7d7d7d" stroke-width="1.2"/></svg>
<span class="t" style="left:185.34px;top:187.50px;font-size:16px;line-height:22px;color:#e8e8e8;font-weight:700;font-style:italic;font-family:'Liberation Serif',serif;transform:scaleX(0.9500);transform-origin:50% 50%;">fx</span>
<div style="left:208px;top:186px;width:1703.5px;height:26px;background:#292929;border:1px solid #696365;border-radius:4px;"></div>
<span class="t" style="left:220.00px;top:189.50px;font-size:13.5px;line-height:19px;color:#f2f2f2;transform:scaleX(0.9644);transform-origin:0 50%;">Bayar Utang Sdl Ke Djp</span>
<svg style="left:1896px;top:194.5px;" width="12" height="8" viewBox="0 0 12 8"><path d="M1.2 1.2 L6 5.6 L10.8 1.2" fill="none" stroke="#e8e8e8" stroke-width="1.6" stroke-linecap="round" stroke-linejoin="round"/></svg>
<div id="g">
<div style="left:25px;top:18px;width:1873px;height:741px;background:#ffffff;"></div>
<div style="left:0px;top:1px;width:1898px;height:17px;background:#0c0c0c;"></div>
<div style="left:418px;top:1px;width:285px;height:17px;background:#656565;border-bottom:2px solid #1f8455;"></div>
<span style="left:25.8px;top:1px;width:28px;height:18px;text-align:center;font:12.5px/18px 'Liberation Sans',sans-serif;color:#e4e4e4;transform:scaleX(.86)">A</span>
<div style="left:53px;top:1px;width:1px;height:17px;background:#474747;"></div>
<span style="left:53.8px;top:1px;width:35px;height:18px;text-align:center;font:12.5px/18px 'Liberation Sans',sans-serif;color:#e4e4e4;transform:scaleX(.86)">B</span>
<div style="left:88px;top:1px;width:1px;height:17px;background:#474747;"></div>
<span style="left:88.8px;top:1px;width:68px;height:18px;text-align:center;font:12.5px/18px 'Liberation Sans',sans-serif;color:#e4e4e4;transform:scaleX(.86)">C</span>
<div style="left:156px;top:1px;width:1px;height:17px;background:#474747;"></div>
<span style="left:156.8px;top:1px;width:114px;height:18px;text-align:center;font:12.5px/18px 'Liberation Sans',sans-serif;color:#e4e4e4;transform:scaleX(.86)">D</span>
<div style="left:270px;top:1px;width:1px;height:17px;background:#474747;"></div>
<span style="left:270.8px;top:1px;width:70px;height:18px;text-align:center;font:12.5px/18px 'Liberation Sans',sans-serif;color:#e4e4e4;transform:scaleX(.86)">E</span>
<div style="left:340px;top:1px;width:1px;height:17px;background:#474747;"></div>
<span style="left:340.8px;top:1px;width:78px;height:18px;text-align:center;font:12.5px/18px 'Liberation Sans',sans-serif;color:#e4e4e4;transform:scaleX(.86)">F</span>
<span style="left:418.8px;top:1px;width:284px;height:18px;text-align:center;font:12.5px/18px 'Liberation Sans',sans-serif;color:#ffffff;transform:scaleX(.86)">G</span>
<span style="left:702.8px;top:1px;width:133px;height:18px;text-align:center;font:12.5px/18px 'Liberation Sans',sans-serif;color:#e4e4e4;transform:scaleX(.86)">H</span>
<div style="left:835px;top:1px;width:1px;height:17px;background:#474747;"></div>
<span style="left:835.8px;top:1px;width:127px;height:18px;text-align:center;font:12.5px/18px 'Liberation Sans',sans-serif;color:#e4e4e4;transform:scaleX(.86)">I</span>
<div style="left:962px;top:1px;width:1px;height:17px;background:#474747;"></div>
<span style="left:962.8px;top:1px;width:130px;height:18px;text-align:center;font:12.5px/18px 'Liberation Sans',sans-serif;color:#e4e4e4;transform:scaleX(.86)">J</span>
<div style="left:1092px;top:1px;width:1px;height:17px;background:#474747;"></div>
<span style="left:1092.8px;top:1px;width:115px;height:18px;text-align:center;font:12.5px/18px 'Liberation Sans',sans-serif;color:#e4e4e4;transform:scaleX(.86)">K</span>
<div style="left:1207px;top:1px;width:1px;height:17px;background:#474747;"></div>
<span style="left:1207.8px;top:1px;width:114px;height:18px;text-align:center;font:12.5px/18px 'Liberation Sans',sans-serif;color:#e4e4e4;transform:scaleX(.86)">L</span>
<div style="left:1321px;top:1px;width:1px;height:17px;background:#474747;"></div>
<span style="left:1321.8px;top:1px;width:88px;height:18px;text-align:center;font:12.5px/18px 'Liberation Sans',sans-serif;color:#e4e4e4;transform:scaleX(.86)">M</span>
<div style="left:1409px;top:1px;width:1px;height:17px;background:#474747;"></div>
<span style="left:1409.8px;top:1px;width:367px;height:18px;text-align:center;font:12.5px/18px 'Liberation Sans',sans-serif;color:#e4e4e4;transform:scaleX(.86)">N</span>
<div style="left:1776px;top:1px;width:1px;height:17px;background:#474747;"></div>
<span style="left:1776.8px;top:1px;width:63px;height:18px;text-align:center;font:12.5px/18px 'Liberation Sans',sans-serif;color:#e4e4e4;transform:scaleX(.86)">O</span>
<div style="left:1839px;top:1px;width:1px;height:17px;background:#474747;"></div>
<span style="left:1839.8px;top:1px;width:65px;height:18px;text-align:center;font:12.5px/18px 'Liberation Sans',sans-serif;color:#e4e4e4;transform:scaleX(.86)">P</span>
<div style="left:1898px;top:1px;width:1px;height:17px;background:#474747;"></div>
<div style="left:25px;top:1px;width:1px;height:17px;background:#474747;"></div>
<svg style="position:absolute;left:10px;top:5px" width="13" height="11"><path d="M12.5 0.5V10.5H1.5Z" fill="#7b7b7b"/></svg>
<div style="left:0px;top:18px;width:25px;height:741px;background:#0e0e0e;"></div>
<div style="left:24px;top:18px;width:1px;height:741px;background:#3a3a3a;"></div>
<div style="left:53px;top:115px;width:103px;height:1px;background:#ececec;"></div>
<div style="left:156px;top:115px;width:936px;height:1px;background:#e1e1e1;"></div>
<div style="left:53px;top:132px;width:103px;height:1px;background:#ececec;"></div>
<div style="left:156px;top:132px;width:936px;height:1px;background:#e1e1e1;"></div>
<div style="left:53px;top:149px;width:103px;height:1px;background:#ececec;"></div>
<div style="left:156px;top:149px;width:936px;height:1px;background:#e1e1e1;"></div>
<div style="left:53px;top:166px;width:103px;height:1px;background:#ececec;"></div>
<div style="left:156px;top:166px;width:936px;height:1px;background:#e1e1e1;"></div>
<div style="left:53px;top:183px;width:103px;height:1px;background:#ececec;"></div>
<div style="left:156px;top:183px;width:936px;height:1px;background:#e1e1e1;"></div>
<div style="left:53px;top:200px;width:103px;height:1px;background:#ececec;"></div>
<div style="left:156px;top:200px;width:936px;height:1px;background:#e1e1e1;"></div>
<div style="left:53px;top:217px;width:103px;height:1px;background:#ececec;"></div>
<div style="left:156px;top:217px;width:936px;height:1px;background:#e1e1e1;"></div>
<div style="left:53px;top:234px;width:103px;height:1px;background:#ececec;"></div>
<div style="left:156px;top:234px;width:936px;height:1px;background:#e1e1e1;"></div>
<div style="left:53px;top:251px;width:103px;height:1px;background:#ececec;"></div>
<div style="left:156px;top:251px;width:936px;height:1px;background:#e1e1e1;"></div>
<div style="left:53px;top:268px;width:103px;height:1px;background:#ececec;"></div>
<div style="left:156px;top:268px;width:936px;height:1px;background:#e1e1e1;"></div>
<div style="left:53px;top:285px;width:103px;height:1px;background:#ececec;"></div>
<div style="left:156px;top:285px;width:936px;height:1px;background:#e1e1e1;"></div>
<div style="left:53px;top:302px;width:103px;height:1px;background:#ececec;"></div>
<div style="left:156px;top:302px;width:936px;height:1px;background:#e1e1e1;"></div>
<div style="left:53px;top:319px;width:103px;height:1px;background:#ececec;"></div>
<div style="left:156px;top:319px;width:936px;height:1px;background:#e1e1e1;"></div>
<div style="left:53px;top:336px;width:103px;height:1px;background:#ececec;"></div>
<div style="left:156px;top:336px;width:936px;height:1px;background:#e1e1e1;"></div>
<div style="left:53px;top:353px;width:103px;height:1px;background:#ececec;"></div>
<div style="left:156px;top:353px;width:936px;height:1px;background:#e1e1e1;"></div>
<div style="left:53px;top:370px;width:103px;height:1px;background:#ececec;"></div>
<div style="left:156px;top:370px;width:936px;height:1px;background:#e1e1e1;"></div>
<div style="left:53px;top:387px;width:103px;height:1px;background:#ececec;"></div>
<div style="left:156px;top:387px;width:936px;height:1px;background:#e1e1e1;"></div>
<div style="left:53px;top:404px;width:103px;height:1px;background:#ececec;"></div>
<div style="left:156px;top:404px;width:936px;height:1px;background:#e1e1e1;"></div>
<div style="left:53px;top:421px;width:103px;height:1px;background:#ececec;"></div>
<div style="left:156px;top:421px;width:936px;height:1px;background:#e1e1e1;"></div>
<div style="left:53px;top:438px;width:103px;height:1px;background:#ececec;"></div>
<div style="left:156px;top:438px;width:936px;height:1px;background:#e1e1e1;"></div>
<div style="left:53px;top:455px;width:103px;height:1px;background:#ececec;"></div>
<div style="left:156px;top:455px;width:936px;height:1px;background:#e1e1e1;"></div>
<div style="left:53px;top:472px;width:103px;height:1px;background:#ececec;"></div>
<div style="left:156px;top:472px;width:936px;height:1px;background:#e1e1e1;"></div>
<div style="left:53px;top:489px;width:103px;height:1px;background:#ececec;"></div>
<div style="left:156px;top:489px;width:936px;height:1px;background:#e1e1e1;"></div>
<div style="left:53px;top:506px;width:103px;height:1px;background:#ececec;"></div>
<div style="left:156px;top:506px;width:936px;height:1px;background:#e1e1e1;"></div>
<div style="left:53px;top:523px;width:103px;height:1px;background:#ececec;"></div>
<div style="left:156px;top:523px;width:936px;height:1px;background:#e1e1e1;"></div>
<div style="left:53px;top:540px;width:103px;height:1px;background:#ececec;"></div>
<div style="left:156px;top:540px;width:936px;height:1px;background:#e1e1e1;"></div>
<div style="left:53px;top:557px;width:103px;height:1px;background:#ececec;"></div>
<div style="left:156px;top:557px;width:936px;height:1px;background:#e1e1e1;"></div>
<div style="left:53px;top:574px;width:103px;height:1px;background:#ececec;"></div>
<div style="left:156px;top:574px;width:936px;height:1px;background:#e1e1e1;"></div>
<div style="left:53px;top:591px;width:103px;height:1px;background:#ececec;"></div>
<div style="left:156px;top:591px;width:936px;height:1px;background:#e1e1e1;"></div>
<div style="left:53px;top:608px;width:103px;height:1px;background:#ececec;"></div>
<div style="left:156px;top:608px;width:936px;height:1px;background:#e1e1e1;"></div>
<div style="left:53px;top:625px;width:103px;height:1px;background:#ececec;"></div>
<div style="left:156px;top:625px;width:936px;height:1px;background:#e1e1e1;"></div>
<div style="left:53px;top:642px;width:103px;height:1px;background:#ececec;"></div>
<div style="left:156px;top:642px;width:936px;height:1px;background:#e1e1e1;"></div>
<div style="left:53px;top:659px;width:103px;height:1px;background:#ececec;"></div>
<div style="left:156px;top:659px;width:936px;height:1px;background:#e1e1e1;"></div>
<div style="left:53px;top:676px;width:103px;height:1px;background:#ececec;"></div>
<div style="left:156px;top:676px;width:936px;height:1px;background:#e1e1e1;"></div>
<div style="left:53px;top:693px;width:103px;height:1px;background:#ececec;"></div>
<div style="left:156px;top:693px;width:936px;height:1px;background:#e1e1e1;"></div>
<div style="left:53px;top:710px;width:103px;height:1px;background:#ececec;"></div>
<div style="left:156px;top:710px;width:936px;height:1px;background:#e1e1e1;"></div>
<div style="left:53px;top:727px;width:103px;height:1px;background:#ececec;"></div>
<div style="left:156px;top:727px;width:936px;height:1px;background:#e1e1e1;"></div>
<div style="left:53px;top:744px;width:103px;height:1px;background:#ececec;"></div>
<div style="left:156px;top:744px;width:936px;height:1px;background:#e1e1e1;"></div>
<div style="left:53px;top:761px;width:103px;height:1px;background:#ececec;"></div>
<div style="left:156px;top:761px;width:936px;height:1px;background:#e1e1e1;"></div>
<div style="left:1409px;top:132px;width:368px;height:1px;background:#e1e1e1;"></div>
<div style="left:1409px;top:149px;width:368px;height:1px;background:#e1e1e1;"></div>
<div style="left:1409px;top:166px;width:368px;height:1px;background:#e1e1e1;"></div>
<div style="left:1409px;top:183px;width:368px;height:1px;background:#e1e1e1;"></div>
<div style="left:1409px;top:200px;width:368px;height:1px;background:#e1e1e1;"></div>
<div style="left:1409px;top:217px;width:368px;height:1px;background:#e1e1e1;"></div>
<div style="left:1409px;top:234px;width:368px;height:1px;background:#e1e1e1;"></div>
<div style="left:1409px;top:251px;width:368px;height:1px;background:#e1e1e1;"></div>
<div style="left:1409px;top:268px;width:368px;height:1px;background:#e1e1e1;"></div>
<div style="left:1409px;top:285px;width:368px;height:1px;background:#e1e1e1;"></div>
<div style="left:1409px;top:302px;width:368px;height:1px;background:#e1e1e1;"></div>
<div style="left:1409px;top:319px;width:368px;height:1px;background:#e1e1e1;"></div>
<div style="left:1409px;top:336px;width:368px;height:1px;background:#e1e1e1;"></div>
<div style="left:1409px;top:353px;width:368px;height:1px;background:#e1e1e1;"></div>
<div style="left:1409px;top:370px;width:368px;height:1px;background:#e1e1e1;"></div>
<div style="left:1409px;top:387px;width:368px;height:1px;background:#e1e1e1;"></div>
<div style="left:1409px;top:404px;width:368px;height:1px;background:#e1e1e1;"></div>
<div style="left:1409px;top:421px;width:368px;height:1px;background:#e1e1e1;"></div>
<div style="left:1409px;top:438px;width:368px;height:1px;background:#e1e1e1;"></div>
<div style="left:1409px;top:455px;width:368px;height:1px;background:#e1e1e1;"></div>
<div style="left:1409px;top:472px;width:368px;height:1px;background:#e1e1e1;"></div>
<div style="left:1409px;top:489px;width:368px;height:1px;background:#e1e1e1;"></div>
<div style="left:1409px;top:506px;width:368px;height:1px;background:#e1e1e1;"></div>
<div style="left:1409px;top:523px;width:368px;height:1px;background:#e1e1e1;"></div>
<div style="left:1409px;top:540px;width:368px;height:1px;background:#e1e1e1;"></div>
<div style="left:1409px;top:557px;width:368px;height:1px;background:#e1e1e1;"></div>
<div style="left:1409px;top:574px;width:368px;height:1px;background:#e1e1e1;"></div>
<div style="left:1409px;top:591px;width:368px;height:1px;background:#e1e1e1;"></div>
<div style="left:1409px;top:608px;width:368px;height:1px;background:#e1e1e1;"></div>
<div style="left:1409px;top:625px;width:368px;height:1px;background:#e1e1e1;"></div>
<div style="left:1409px;top:642px;width:368px;height:1px;background:#e1e1e1;"></div>
<div style="left:1409px;top:659px;width:368px;height:1px;background:#e1e1e1;"></div>
<div style="left:1409px;top:676px;width:368px;height:1px;background:#e1e1e1;"></div>
<div style="left:1409px;top:693px;width:368px;height:1px;background:#e1e1e1;"></div>
<div style="left:1409px;top:710px;width:368px;height:1px;background:#e1e1e1;"></div>
<div style="left:1409px;top:727px;width:368px;height:1px;background:#e1e1e1;"></div>
<div style="left:1409px;top:744px;width:368px;height:1px;background:#e1e1e1;"></div>
<div style="left:156px;top:34px;width:184px;height:1px;background:#e1e1e1;"></div>
<div style="left:156px;top:50px;width:184px;height:1px;background:#e1e1e1;"></div>
<div style="left:156px;top:98px;width:184px;height:1px;background:#e1e1e1;"></div>
<div style="left:270px;top:18px;width:1px;height:741px;background:#e1e1e1;"></div>
<div style="left:340px;top:98px;width:1px;height:661px;background:#e1e1e1;"></div>
<div style="left:418px;top:98px;width:1px;height:661px;background:#e1e1e1;"></div>
<div style="left:702px;top:98px;width:1px;height:661px;background:#e1e1e1;"></div>
<div style="left:835px;top:98px;width:1px;height:661px;background:#e1e1e1;"></div>
<div style="left:962px;top:98px;width:1px;height:661px;background:#e1e1e1;"></div>
<div style="left:1092px;top:133px;width:1px;height:16px;background:#e1e1e1;"></div>
<div style="left:1207px;top:133px;width:1px;height:16px;background:#e1e1e1;"></div>
<div style="left:1321px;top:133px;width:1px;height:16px;background:#e1e1e1;"></div>
<div style="left:1409px;top:133px;width:1px;height:16px;background:#e1e1e1;"></div>
<div style="left:1776px;top:133px;width:1px;height:16px;background:#e1e1e1;"></div>
<div style="left:1839px;top:133px;width:1px;height:16px;background:#e1e1e1;"></div>
<div style="left:53px;top:116px;width:1px;height:16px;background:#e1e1e1;"></div>
<div style="left:53px;top:167px;width:1px;height:16px;background:#e1e1e1;"></div>
<div style="left:156px;top:115px;width:1px;height:644px;background:#ececec;"></div>
<div style="left:88px;top:116px;width:68px;height:643px;background:#fce4d6;"></div>
<div style="left:340px;top:34px;width:752px;height:65px;background:#a9d08e;"></div>
<div style="left:53px;top:18px;width:35px;height:81px;background:#000000;"></div>
<div style="left:340px;top:132px;width:623px;height:18px;background:#f4b084;"></div>
<div style="left:340px;top:183px;width:623px;height:18px;background:#f4b084;"></div>
<div style="left:340px;top:285px;width:623px;height:18px;background:#f4b084;"></div>
<div style="left:340px;top:625px;width:623px;height:18px;background:#f4b084;"></div>
<div style="left:25px;top:66px;width:1873px;height:1px;background:#808080;"></div>
<div style="left:340px;top:66px;width:752px;height:1px;background:#7d9a69;"></div>
<div style="left:53px;top:66px;width:35px;height:1px;background:#000;"></div>
<div style="left:53px;top:18px;width:35px;height:34px;overflow:hidden;background:#000"><span class="ct" style="right:-0.4px;top:0;font-weight:bold;color:#fff;transform:scaleX(.93);transform-origin:100% 0">NG GI</span><span class="ct" style="right:0.2px;top:15.8px;font-weight:bold;color:#fff;transform:scaleX(.93);transform-origin:100% 0">UTA L</span></div>
<span class="ct" style="left:25.7px;top:49.64999999999998px;width:28px;text-align:center;transform:scaleX(0.93);transform-origin:50% 0;">No</span>
<span class="ct" style="left:340px;top:49.64999999999998px;width:78px;text-align:center;font-weight:bold;transform:scaleX(0.93);transform-origin:50% 0;">TANGGAL</span>
<span class="ct" style="left:419.5px;top:49.64999999999998px;width:284px;text-align:center;font-weight:bold;transform:scaleX(0.885);transform-origin:50% 0;">KETERANGAN</span>
<span class="ct" style="left:702px;top:49.64999999999998px;width:133px;text-align:center;font-weight:bold;transform:scaleX(0.93);transform-origin:50% 0;">DB (Masuk)</span>
<span class="ct" style="left:835px;top:49.64999999999998px;width:127px;text-align:center;font-weight:bold;transform:scaleX(0.93);transform-origin:50% 0;">CR (Keluar)</span>
<span class="ct" style="left:962px;top:49.64999999999998px;width:130px;text-align:center;font-weight:bold;transform:scaleX(0.93);transform-origin:50% 0;">SALDO</span>
<span class="ct" style="left:1092px;top:49.64999999999998px;width:115px;text-align:center;transform:scaleX(0.93);transform-origin:50% 0;">Bunga bank</span>
<span class="ct" style="left:1207px;top:49.64999999999998px;width:114px;text-align:center;transform:scaleX(0.93);transform-origin:50% 0;">Penjualan</span>
<span class="ct" style="left:1321px;top:49.64999999999998px;width:88px;text-align:center;transform:scaleX(0.93);transform-origin:50% 0;">Ayat Silang</span>
<span class="ct" style="left:703px;top:65.64999999999998px;width:126.1px;text-align:right;font-weight:bold;transform:scaleX(0.918);transform-origin:100% 0;">122.509.015</span>
<span class="ct" style="left:835px;top:65.64999999999998px;width:121px;text-align:right;font-weight:bold;transform:scaleX(0.918);transform-origin:100% 0;">117.866.503</span>
<span class="ct" style="left:159.4px;top:81.64999999999998px;width:100px;text-align:left;transform:scaleX(0.93);transform-origin:0 0;">No Voucher</span>
<span class="ct" style="left:272.8px;top:81.64999999999998px;width:60px;text-align:left;transform:scaleX(0.93);transform-origin:0 0;">COA</span>
<div class="tr" style="left:704px;top:67px"></div>
<div class="tr" style="left:836px;top:67px"></div>
<div class="fb" style="left:72px;top:82px"></div>
<div class="fb" style="left:140px;top:82px"></div>
<div class="fb" style="left:254px;top:82px"></div>
<div class="fb" style="left:324px;top:82px"></div>
<div class="fb" style="left:402px;top:82px"></div>
<div class="fb" style="left:687px;top:82px"></div>
<div class="fb" style="left:819px;top:82px"></div>
<div class="fb" style="left:946px;top:82px"></div>
<div class="fb" style="left:1076px;top:82px"></div>
<div class="fb" style="left:1191px;top:82px"></div>
<div class="fb" style="left:1305px;top:82px"></div>
<div class="fb" style="left:1393px;top:82px"></div>
<div class="fb" style="left:1760px;top:82px"></div>
<div class="r" style="top:18px;height:16px"><span class="rh" style="top:0.5px">1</span></div>
<div style="left:0px;top:34px;width:24px;height:1px;background:#4a4a4a;"></div>
<div class="r" style="top:34px;height:16px"><span class="rh" style="top:0.5px">2</span></div>
<div style="left:0px;top:50px;width:24px;height:1px;background:#4a4a4a;"></div>
<div class="r" style="top:50px;height:16px"><span class="rh" style="top:0.5px">3</span></div>
<div style="left:0px;top:66px;width:24px;height:1px;background:#4a4a4a;"></div>
<div class="r" style="top:66px;height:16px"><span class="rh" style="top:0.5px">4</span></div>
<div style="left:0px;top:82px;width:24px;height:1px;background:#4a4a4a;"></div>
<div class="r" style="top:82px;height:16px"><span class="rh" style="top:0.5px">5</span></div>
<div style="left:0px;top:98px;width:24px;height:1px;background:#4a4a4a;"></div>
<div class="r" style="top:99px"><span class="rh">6</span><span class="a n">0</span><span class="f">01/09/2025</span><span class="g" style="transform:scaleX(.886)">SALDO AWAL</span><span class="h n">-</span><span class="j n">945.000,00</span></div>
<div style="left:0px;top:115px;width:24px;height:1px;background:#4a4a4a;"></div>
<div class="r" style="top:116px"><span class="rh">7</span><span class="a n">1</span><span class="b n">9</span><span class="c">September</span><span class="d">SDL-BM-0925-001</span><div class="tr" style="left:271px;top:0"></div><span class="e">2300</span><span class="f">01/09/2025</span><span class="g">Pemindahan Saldo Rek Lama</span><span class="h n">7.336.015</span><span class="i n">-</span><span class="j n">8.281.015,00</span><span class="l n">7.336.015,00</span></div>
<div style="left:0px;top:132px;width:24px;height:1px;background:#4a4a4a;"></div>
<div class="r" style="top:133px"><span class="rh">8</span><span class="a n">2</span><span class="b n">9</span><span class="c">September</span><span class="d">SDL-BM-0925-002</span><span class="e">4000.01</span><span class="f">01/09/2025</span><span class="g">Pak Iyas</span><span class="h n">250.000</span><span class="j n">8.531.015,00</span><span class="l n">250.000,00</span><span class="m n">-</span></div>
<div style="left:0px;top:149px;width:24px;height:1px;background:#4a4a4a;"></div>
<div class="r" style="top:150px"><span class="rh">9</span><span class="a n">3</span><span class="b n">9</span><span class="c">September</span><span class="d">SDL-BM-0925-003</span><span class="e">4000.01</span><span class="f">01/09/2025</span><span class="g">Pak Joe 2812</span><span class="h n">400.000</span><span class="i n">-</span><span class="j n">8.931.015,00</span><span class="l n">400.000,00</span><span class="m n">-</span></div>
<div style="left:0px;top:166px;width:24px;height:1px;background:#4a4a4a;"></div>
<div class="r" style="top:167px"><span class="rh">10</span><span class="a n">4</span><span class="b n">9</span><span class="c">September</span><span class="d">SDL-BM-0925-004</span><span class="e">4000.01</span><span class="f">01/09/2025</span><span class="g">Pak Tata</span><span class="h n">5.000.000</span><span class="i n">-</span><span class="j n">13.931.015,00</span><span class="l n">5.000.000,00</span></div>
<div style="left:0px;top:183px;width:24px;height:1px;background:#4a4a4a;"></div>
<div class="r" style="top:184px"><span class="rh">11</span><span class="a n">5</span><span class="b n">9</span><span class="c">September</span><span class="d">SDL-BK-0925-001</span><span class="e">ayat silang</span><span class="f">02/09/2025</span><span class="g">Tarik Tunai untuk kas</span><span class="i n">2.000.000</span><span class="j n">11.931.015,00</span><span class="ld n">-</span></div>
<div style="left:0px;top:200px;width:24px;height:1px;background:#4a4a4a;"></div>
<div class="r" style="top:201px"><span class="rh">12</span><span class="a n">6</span><span class="b n">9</span><span class="c">September</span><span class="d">SDL-BM-0925-005</span><span class="e">4000.01</span><span class="f">02/09/2025</span><span class="g">Dp Pak Dayat 2816</span><span class="h n">2.200.000</span><span class="i n">-</span><span class="j n">14.131.015,00</span><span class="l n">2.200.000,00</span></div>
<div style="left:0px;top:217px;width:24px;height:1px;background:#4a4a4a;"></div>
<div class="r" style="top:218px"><span class="rh">13</span><span class="a n">7</span><span class="b n">9</span><span class="c">September</span><span class="d">SDL-BK-0925-002</span><div class="tr" style="left:271px;top:0"></div><span class="e">5100</span><span class="f">02/09/2025</span><span class="g">Beli Plat Galvanil 1Mm, 7Lbr</span><span class="h n">-</span><span class="i n">2.835.000</span><span class="j n">11.296.015,00</span><span class="ld n">-</span></div>
<div style="left:0px;top:234px;width:24px;height:1px;background:#4a4a4a;"></div>
<div class="r" style="top:235px"><div style="left:0;top:-1px;width:25px;height:18px;background:#636363;border-right:2px solid #1f8455"></div><span class="rh">14</span><span class="a n">8</span><span class="b n">9</span><span class="c">September</span><span class="d">SDL-BK-0925-003</span><div class="tr" style="left:271px;top:0"></div><span class="e">2200</span><span class="f">02/09/2025</span><span class="g">Bayar Utang Sdl Ke Djp</span><span class="h n">-</span><span class="i n">3.775.000</span><span class="j n">7.521.015,00</span><span class="ld n">-</span></div>
<div style="left:0px;top:251px;width:24px;height:1px;background:#4a4a4a;"></div>
<div class="r" style="top:252px"><span class="rh">15</span><span class="a n">9</span><span class="b n">9</span><span class="c">September</span><span class="d">SDL-BM-0925-006</span><span class="e">4000.01</span><span class="f">02/09/2025</span><span class="g">Pelunasan Pak Dayat 2816</span><span class="h n">2.200.000</span><span class="i n">-</span><span class="j n">9.721.015,00</span><span class="l n">2.200.000,00</span></div>
<div style="left:0px;top:268px;width:24px;height:1px;background:#4a4a4a;"></div>
<div class="r" style="top:269px"><span class="rh">16</span><span class="a n">10</span><span class="b n">9</span><span class="c">September</span><span class="d">SDL-BM-0925-007</span><span class="e">4000.01</span><span class="f">03/09/2025</span><span class="g">Pak Hamdan 2824</span><span class="h n">75.000</span><span class="i n">-</span><span class="j n">9.796.015,00</span><span class="l n">75.000,00</span></div>
<div style="left:0px;top:285px;width:24px;height:1px;background:#4a4a4a;"></div>
<div class="r" style="top:286px"><span class="rh">17</span><span class="a n">11</span><span class="b n">9</span><span class="c">September</span><span class="d">SDL-BK-0925-004</span><span class="e">ayat silang</span><span class="f">04/09/2025</span><span class="g">Tarik Tunai untuk kas</span><span class="i n">3.000.000</span><span class="j n">6.796.015,00</span><span class="ld n">-</span></div>
<div style="left:0px;top:302px;width:24px;height:1px;background:#4a4a4a;"></div>
<div class="r" style="top:303px"><span class="rh">18</span><span class="a n">12</span><span class="b n">9</span><span class="c">September</span><span class="d">SDL-BK-0925-005</span><span class="e">6201.01</span><span class="f">06/09/2025</span><span class="g">Kasbon Mingguan Riski</span><span class="h n">-</span><span class="i n">2.200.000</span><span class="j n">4.596.015,00</span><span class="ld n">-</span></div>
<div style="left:0px;top:319px;width:24px;height:1px;background:#4a4a4a;"></div>
<div class="r" style="top:320px"><span class="rh">19</span><span class="a n">13</span><span class="b n">9</span><span class="c">September</span><span class="d">SDL-BK-0925-006</span><span class="e">6201.01</span><span class="f">06/09/2025</span><span class="g">Kasbon Mingguan Subro</span><span class="h n">-</span><span class="i n">600.000</span><span class="j n">3.996.015,00</span><span class="ld n">-</span></div>
<div style="left:0px;top:336px;width:24px;height:1px;background:#4a4a4a;"></div>
<div class="r" style="top:337px"><span class="rh">20</span><span class="a n">14</span><span class="b n">9</span><span class="c">September</span><span class="d">SDL-BK-0925-007</span><span class="e">6201.01</span><span class="f">06/09/2025</span><span class="g">Kasbon Mingguan Anggi</span><span class="h n">-</span><span class="i n">1.500.000</span><span class="j n">2.496.015,00</span><span class="ld n">-</span></div>
<div style="left:0px;top:353px;width:24px;height:1px;background:#4a4a4a;"></div>
<div class="r" style="top:354px"><span class="rh">21</span><span class="a n">15</span><span class="b n">9</span><span class="c">September</span><span class="d">SDL-BK-0925-008</span><span class="e">7200.02</span><span class="f">06/09/2025</span><span class="g">Biaya Admin</span><span class="h n">-</span><span class="i n">2.500</span><span class="j n">2.493.515,00</span><span class="ld n">-</span></div>
<div style="left:0px;top:370px;width:24px;height:1px;background:#4a4a4a;"></div>
<div class="r" style="top:371px"><span class="rh">22</span><span class="a n">16</span><span class="b n">9</span><span class="c">September</span><span class="d">SDL-BM-0925-008</span><span class="e">4000.01</span><span class="f">08/09/2025</span><span class="g">Pak Juna 2830</span><span class="h n">460.000</span><span class="i n">-</span><span class="j n">2.953.515,00</span><span class="l n">460.000,00</span></div>
<div style="left:0px;top:387px;width:24px;height:1px;background:#4a4a4a;"></div>
<div class="r" style="top:388px"><span class="rh">23</span><span class="a n">17</span><span class="b n">9</span><span class="c">September</span><span class="d">SDL-BK-0925-009</span><span class="e">6203.04</span><span class="f">08/09/2025</span><span class="g">Bayar Pembuatan Cv</span><span class="h n">-</span><span class="i n">2.500.000</span><span class="j n">453.515,00</span><span class="ld n">-</span></div>
<div style="left:0px;top:404px;width:24px;height:1px;background:#4a4a4a;"></div>
<div class="r" style="top:405px"><span class="rh">24</span><span class="a n">18</span><span class="b n">9</span><span class="c">September</span><span class="d">SDL-BM-0925-009</span><span class="e">4000.01</span><span class="f">08/09/2025</span><span class="g">Cicilan Laser Sentosa Abadi</span><span class="h n">4.695.000</span><span class="i n">-</span><span class="j n">5.148.515,00</span><span class="l n">4.695.000,00</span></div>
<div style="left:0px;top:421px;width:24px;height:1px;background:#4a4a4a;"></div>
<div class="r" style="top:422px"><span class="rh">25</span><span class="a n">19</span><span class="b n">9</span><span class="c">September</span><span class="d">SDL-BM-0925-010</span><span class="e">4000.01</span><span class="f">08/09/2025</span><span class="g">Pak Yos 2833</span><span class="h n">150.000</span><span class="i n">-</span><span class="j n">5.298.515,00</span><span class="l n">150.000,00</span></div>
<div style="left:0px;top:438px;width:24px;height:1px;background:#4a4a4a;"></div>
<div class="r" style="top:439px"><span class="rh">26</span><span class="a n">20</span><span class="b n">9</span><span class="c">September</span><span class="d">SDL-BK-0925-010</span><div class="tr" style="left:271px;top:0"></div><span class="e">5100</span><span class="f">09/09/2025</span><span class="g">Beli Plat Ss Hl 0.8Mm, 1Lbr</span><span class="h n">-</span><span class="i n">835.000</span><span class="j n">4.463.515,00</span><span class="ld n">-</span></div>
<div style="left:0px;top:455px;width:24px;height:1px;background:#4a4a4a;"></div>
<div class="r" style="top:456px"><span class="rh">27</span><span class="a n">21</span><span class="b n">9</span><span class="c">September</span><span class="d">SDL-BM-0925-011</span><span class="e">4000.01</span><span class="f">09/09/2025</span><span class="g">Pak Yudo 2837</span><span class="h n">1.500.000</span><span class="i n">-</span><span class="j n">5.963.515,00</span><span class="l n">1.500.000,00</span></div>
<div style="left:0px;top:472px;width:24px;height:1px;background:#4a4a4a;"></div>
<div class="r" style="top:473px"><span class="rh">28</span><span class="a n">22</span><span class="b n">9</span><span class="c">September</span><span class="d">SDL-BM-0925-012</span><span class="e">4000.01</span><span class="f">10/09/2025</span><span class="g">Pak Rizal 2846</span><span class="h n">200.000</span><span class="i n">-</span><span class="j n">6.163.515,00</span><span class="l n">200.000,00</span></div>
<div style="left:0px;top:489px;width:24px;height:1px;background:#4a4a4a;"></div>
<div class="r" style="top:490px"><span class="rh">29</span><span class="a n">23</span><span class="b n">9</span><span class="c">September</span><span class="d">SDL-BK-0925-011</span><div class="tr" style="left:271px;top:0"></div><span class="e">5100</span><span class="f">11/09/2025</span><span class="g">Beli Plat Besi 2Mm,1Lbr</span><span class="h n">-</span><span class="i n">535.000</span><span class="j n">5.628.515,00</span><span class="ld n">-</span></div>
<div style="left:0px;top:506px;width:24px;height:1px;background:#4a4a4a;"></div>
<div class="r" style="top:507px"><span class="rh">30</span><span class="a n">24</span><span class="b n">9</span><span class="c">September</span><span class="d">SDL-BK-0925-012</span><div class="tr" style="left:271px;top:0"></div><span class="e">5100</span><span class="f">11/09/2025</span><span class="g">Bayar Mdf Ke Grapica</span><span class="h n">-</span><span class="i n">570.000</span><span class="j n">5.058.515,00</span><span class="ld n">-</span></div>
<div style="left:0px;top:523px;width:24px;height:1px;background:#4a4a4a;"></div>
<div class="r" style="top:524px"><span class="rh">31</span><span class="a n">25</span><span class="b n">9</span><span class="c">September</span><span class="d">SDL-BM-0925-013</span><span class="e">4000.01</span><span class="f">11/09/2025</span><span class="g">Pak Andri Irawan 2851</span><span class="h n">1.100.000</span><span class="i n">-</span><span class="j n">6.158.515,00</span><span class="l n">1.100.000,00</span></div>
<div style="left:0px;top:540px;width:24px;height:1px;background:#4a4a4a;"></div>
<div class="r" style="top:541px"><span class="rh">32</span><span class="a n">26</span><span class="b n">9</span><span class="c">September</span><span class="d">SDL-BM-0925-014</span><span class="e">4000.01</span><span class="f">12/09/2025</span><span class="g">Pak Rizal 2846</span><span class="h n">10.000</span><span class="i n">-</span><span class="j n">6.168.515,00</span><span class="l n">10.000,00</span></div>
<div style="left:0px;top:557px;width:24px;height:1px;background:#4a4a4a;"></div>
<div class="r" style="top:558px"><span class="rh">33</span><span class="a n">27</span><span class="b n">9</span><span class="c">September</span><span class="d">SDL-BK-0925-013</span><div class="tr" style="left:271px;top:0"></div><span class="e">5100</span><span class="f">16/09/2025</span><span class="g">Beli Plat Galvanil 1,5Mm, 1Lbr</span><span class="h n">-</span><span class="i n">1.038.000</span><span class="j n">5.130.515,00</span><span class="ld n">-</span></div>
<div style="left:0px;top:574px;width:24px;height:1px;background:#4a4a4a;"></div>
<div class="r" style="top:575px"><span class="rh">34</span><span class="a n">28</span><span class="b n">9</span><span class="c">September</span><span class="d">SDL-BM-0925-015</span><span class="e">4000.01</span><span class="f">19/09/2025</span><span class="g">Pak Isman 2867</span><span class="h n">1.450.000</span><span class="i n">-</span><span class="j n">6.580.515,00</span><span class="l n">1.450.000,00</span></div>
<div style="left:0px;top:591px;width:24px;height:1px;background:#4a4a4a;"></div>
<div class="r" style="top:592px"><span class="rh">35</span><span class="a n">29</span><span class="b n">9</span><span class="c">September</span><span class="d">SDL-BM-0925-016</span><span class="e">4000.01</span><span class="f">19/09/2025</span><span class="g">Sentosa Abadi Bln Agustus 25</span><span class="h n">1.050.000</span><span class="i n">-</span><span class="j n">7.630.515,00</span><span class="l n">1.050.000,00</span></div>
<div style="left:0px;top:608px;width:24px;height:1px;background:#4a4a4a;"></div>
<div class="r" style="top:609px"><span class="rh">36</span><span class="a n">30</span><span class="b n">9</span><span class="c">September</span><span class="d">SDL-BK-0925-014</span><div class="tr" style="left:271px;top:0"></div><span class="e">5100</span><span class="f">22/09/2025</span><span class="g">Beli Plat Besi 2Mm,1Lbr</span><span class="h n">-</span><span class="i n">535.000</span><span class="j n">7.095.515,00</span><span class="ld n">-</span></div>
<div style="left:0px;top:625px;width:24px;height:1px;background:#4a4a4a;"></div>
<div class="r" style="top:626px"><span class="rh">37</span><span class="a n">31</span><span class="b n">9</span><span class="c">September</span><span class="d">SDL-BK-0925-015</span><span class="e">ayat silang</span><span class="f">22/09/2025</span><span class="g">Tarik Tunai untuk kas</span><span class="i n">2.000.000</span><span class="j n">5.095.515,00</span><span class="ld n">-</span></div>
<div style="left:0px;top:642px;width:24px;height:1px;background:#4a4a4a;"></div>
<div class="r" style="top:643px"><span class="rh">38</span><span class="a n">32</span><span class="b n">9</span><span class="c">September</span><span class="d">SDL-BM-0925-017</span><span class="e">4000.01</span><span class="f">24/09/2025</span><span class="g">Pak Madi 2878</span><span class="h n">350.000</span><span class="i n">-</span><span class="j n">5.445.515,00</span><span class="l n">350.000,00</span></div>
<div style="left:0px;top:659px;width:24px;height:1px;background:#4a4a4a;"></div>
<div class="r" style="top:660px"><span class="rh">39</span><span class="a n">33</span><span class="b n">9</span><span class="c">September</span><span class="d">SDL-BM-0925-018</span><span class="e">4000.01</span><span class="f">24/09/2025</span><span class="g">Pak Juna 2877</span><span class="h n">621.000</span><span class="i n">-</span><span class="j n">6.066.515,00</span><span class="l n">621.000,00</span></div>
<div style="left:0px;top:676px;width:24px;height:1px;background:#4a4a4a;"></div>
<div class="r" style="top:677px"><span class="rh">40</span><span class="a n">34</span><span class="b n">9</span><span class="c">September</span><span class="d">SDL-BM-0925-019</span><span class="e">4000.01</span><span class="f">25/09/2025</span><span class="g">Pak Tata</span><span class="h n">3.000.000</span><span class="i n">-</span><span class="j n">9.066.515,00</span><span class="l n">3.000.000,00</span></div>
<div style="left:0px;top:693px;width:24px;height:1px;background:#4a4a4a;"></div>
<div class="r" style="top:694px"><span class="rh">41</span><span class="a n">35</span><span class="b n">9</span><span class="c">September</span><span class="d">SDL-BK-0925-016</span><div class="tr" style="left:271px;top:0"></div><span class="e">2300</span><span class="f">26/09/2025</span><span class="g">Tarik Tunai</span><span class="h n">-</span><span class="i n">500.000</span><span class="j n">8.566.515,00</span><span class="ld n">-</span></div>
<div style="left:0px;top:710px;width:24px;height:1px;background:#4a4a4a;"></div>
<div class="r" style="top:711px"><span class="rh">42</span><span class="a n">36</span><span class="b n">9</span><span class="c">September</span><span class="d">SDL-BK-0925-017</span><div class="tr" style="left:271px;top:0"></div><span class="e">2300</span><span class="f">27/09/2025</span><span class="g">Kasbon Mingguan Riski</span><span class="h n">-</span><span class="i n">1.500.000</span><span class="j n">7.066.515,00</span><span class="ld n">-</span></div>
<div style="left:0px;top:727px;width:24px;height:1px;background:#4a4a4a;"></div>
<div class="r" style="top:728px"><span class="rh">43</span><span class="a n">37</span><span class="b n">9</span><span class="c">September</span><span class="d">SDL-BK-0925-018</span><span class="e">6201.01</span><span class="f">30/09/2025</span><span class="g">Sisa Gaji+Bonus Edi</span><span class="h n">-</span><span class="i n">345.684</span><span class="j n">6.720.831,00</span><span class="ld n">-</span></div>
<div style="left:0px;top:744px;width:24px;height:1px;background:#4a4a4a;"></div>
<div class="r" style="top:745px"><span class="rh">44</span><span class="a n">38</span><span class="b n">9</span><span class="c">September</span><span class="d">SDL-BK-0925-019</span><span class="e">6201.01</span><span class="f">30/09/2025</span><span class="g">Sisa Gaji+Bonus Subro</span><span class="h n">-</span><span class="i n">284.263</span><span class="j n">6.436.568,00</span><span class="ld n">-</span></div>
<div style="left:0px;top:761px;width:24px;height:1px;background:#4a4a4a;"></div>
<div style="left:417px;top:233px;width:287px;height:20px;background:transparent;border:2px solid #217346;"></div>
<div style="left:699px;top:248px;width:6px;height:6px;background:#217346;border:1px solid #fff;border-right:0;border-bottom:0;"></div>
<div style="left:1898px;top:1px;width:22px;height:758px;background:#0e0e0e;"></div>
<div style="left:1905px;top:18px;width:9px;height:134px;background:#9b9b9b;border-radius:4.5px;"></div>
<svg style="position:absolute;left:1904px;top:4px" width="11" height="9"><path d="M1 7.5 L5.5 1.5 L10 7.5Z" fill="#a0a0a0"/></svg>
<svg style="position:absolute;left:1904px;top:748px" width="11" height="9"><path d="M1 1.5 L5.5 7.5 L10 1.5Z" fill="#a0a0a0"/></svg>
</div>
<div style="left:1072px;top:212px;width:68.5px;height:18.5px;background:#f9f9f9;border-radius:4px;border:1px solid #dcdcdc;box-shadow:0 2px 6px rgba(0,0,0,.28);"></div>
<span class="t" style="left:1075.50px;top:212.80px;font-size:12px;line-height:17px;color:#262626;transform:scaleX(0.9314);transform-origin:0 50%;">Formula Bar</span>
<div style="left:0px;top:978px;width:1920px;height:32px;background:#ffffff;"></div>
<div style="left:0px;top:978px;width:452px;height:32px;background:#101114;border-top-right-radius:5px;"></div>
<div style="left:569px;top:978px;width:1351px;height:32px;background:#101114;border-top-left-radius:5px;"></div>
<div style="left:440px;top:1000px;width:140px;height:10px;background:#101114;"></div>
<svg style="left:28px;top:988px;" width="8" height="12" viewBox="0 0 8 12"><path d="M6.5 1 L1.5 6 L6.5 11" fill="none" stroke="#8a8a8a" stroke-width="1.3"/></svg>
<svg style="left:60px;top:988px;" width="8" height="12" viewBox="0 0 8 12"><path d="M1.5 1 L6.5 6 L1.5 11" fill="none" stroke="#8a8a8a" stroke-width="1.3"/></svg>
<span class="t" style="left:125.00px;top:984.20px;font-size:14px;line-height:20px;color:#f2f2f2;transform:scaleX(1.0312);transform-origin:0 50%;">Note</span>
<div style="left:169px;top:983px;width:1px;height:22px;background:#4a4a4a;"></div>
<div style="left:173px;top:982px;width:46px;height:24px;background:#ffc20e;border-radius:4px;"></div>
<span class="t" style="left:182.00px;top:984.20px;font-size:14px;line-height:20px;color:#3a2c00;transform:scaleX(0.9388);transform-origin:0 50%;">Final</span>
<div style="left:223px;top:983px;width:1px;height:22px;background:#4a4a4a;"></div>
<div style="left:228px;top:982px;width:58px;height:24px;background:#548235;border-radius:4px;"></div>
<span class="t" style="left:236.00px;top:984.20px;font-size:14px;line-height:20px;color:#eaf3e2;transform:scaleX(0.9143);transform-origin:0 50%;">PPh 21</span>
<div style="left:290px;top:983px;width:1px;height:22px;background:#4a4a4a;"></div>
<div style="left:295px;top:982px;width:94px;height:24px;background:#70ad47;border-radius:4px;"></div>
<span class="t" style="left:304.00px;top:984.20px;font-size:14px;line-height:20px;color:#16270a;transform:scaleX(0.9542);transform-origin:0 50%;">BP21-Kartap</span>
<div style="left:393px;top:983px;width:1px;height:22px;background:#4a4a4a;"></div>
<span class="t" style="left:407.00px;top:984.20px;font-size:14px;line-height:20px;color:#f2f2f2;transform:scaleX(0.8675);transform-origin:0 50%;">GAJI</span>
<div style="left:447px;top:983px;width:1px;height:22px;background:#4a4a4a;"></div>
<div style="left:452px;top:978px;width:117px;height:28px;background:#ffffff;border-radius:0 0 5px 5px;"></div>
<span class="t" style="left:460.50px;top:981.00px;font-size:14px;line-height:20px;color:#1e1e1e;transform:scaleX(0.9960);transform-origin:0 50%;-webkit-text-stroke:0.3px #1e1e1e;">Rekening Koran</span>
<div style="left:460.5px;top:1001px;width:100.5px;height:2px;background:#1f8455;border-radius:1px;"></div>
<div style="left:573px;top:983px;width:1px;height:22px;background:#4a4a4a;"></div>
<span class="t" style="left:587.00px;top:984.20px;font-size:14px;line-height:20px;color:#f2f2f2;transform:scaleX(0.9082);transform-origin:0 50%;">Kas Kecil</span>
<div style="left:654px;top:983px;width:1px;height:22px;background:#4a4a4a;"></div>
<span class="t" style="left:668.00px;top:984.20px;font-size:14px;line-height:20px;color:#f2f2f2;transform:scaleX(0.9167);transform-origin:0 50%;">Rekap RK</span>
<div style="left:739px;top:983px;width:1px;height:22px;background:#4a4a4a;"></div>
<span class="t" style="left:753.00px;top:984.20px;font-size:14px;line-height:20px;color:#f2f2f2;transform:scaleX(0.9553);transform-origin:0 50%;">Penjualan</span>
<div style="left:830px;top:983px;width:1px;height:22px;background:#4a4a4a;"></div>
<svg style="left:872px;top:988px;" width="12" height="12" viewBox="0 0 12 12"><path d="M6 0.5V11.5 M0.5 6H11.5" stroke="#e8e8e8" stroke-width="1.2"/></svg>
<div style="left:1154px;top:990px;width:2px;height:2px;background:#e0e0e0;border-radius:1px;"></div>
<div style="left:1154px;top:994px;width:2px;height:2px;background:#e0e0e0;border-radius:1px;"></div>
<div style="left:1154px;top:998px;width:2px;height:2px;background:#e0e0e0;border-radius:1px;"></div>
<svg style="left:1175px;top:989px;" width="8" height="10" viewBox="0 0 8 10"><path d="M7.5 0.5 L1 5 L7.5 9.5Z" fill="#8c8c8c"/></svg>
<div style="left:1188px;top:989px;width:646px;height:9px;background:#9b9b9b;border-radius:4.5px;"></div>
<svg style="left:1885px;top:989px;" width="8" height="10" viewBox="0 0 8 10"><path d="M0.5 0.5 L7 5 L0.5 9.5Z" fill="#8c8c8c"/></svg>
<div style="left:0px;top:1010px;width:1920px;height:22px;background:#16171a;border-top:1px solid #3a3b3e;"></div>
<span class="t" style="left:11.00px;top:1013.80px;font-size:11.5px;line-height:16px;color:#eeeeee;transform:scaleX(0.9323);transform-origin:0 50%;">Ready</span>
<svg style="left:61px;top:1013px;" width="16" height="17" viewBox="0 0 16 17"><circle cx="7.4" cy="2.6" r="1.7" fill="none" stroke="#f0f0f0" stroke-width="1"/><path d="M1.4 5.4 C4.5 6.6 10 6.6 13.2 5.4 M5.3 6.6 V9.6 L3.3 14.8 M9.5 6.6 V9.6 L10.3 11.4" fill="none" stroke="#f0f0f0" stroke-width="1.1" stroke-linecap="round"/><path d="M9.2 11.2 L14.4 16 M14.4 11.2 L9.2 16" stroke="#f0f0f0" stroke-width="1.1"/></svg>
<span class="t" style="left:80.00px;top:1012.80px;font-size:11.5px;line-height:16px;color:#ffffff;font-weight:700;transform:scaleX(0.9169);transform-origin:0 50%;">Accessibility: Investigate</span>
<div style="left:1620px;top:1011px;width:40px;height:21px;background:#202124;"></div>
<svg style="left:1633px;top:1014px;" width="14" height="14" viewBox="0 0 14 14"><rect x="0.6" y="0.6" width="12.8" height="12.8" fill="none" stroke="#f0f0f0" stroke-width="1.1"/><path d="M4.9 0.6V13.4 M9.1 0.6V13.4 M0.6 4.9H13.4 M0.6 9.1H13.4" stroke="#f0f0f0" stroke-width="1"/></svg>
<svg style="left:1673px;top:1014px;" width="14" height="14" viewBox="0 0 14 14"><rect x="0.6" y="0.6" width="12.8" height="12.8" fill="none" stroke="#f0f0f0" stroke-width="1.1"/><rect x="3.6" y="3.6" width="6.8" height="6.8" fill="none" stroke="#f0f0f0" stroke-width="1"/><path d="M5 5.8H9 M5 8H9" stroke="#f0f0f0" stroke-width="0.9"/></svg>
<svg style="left:1713px;top:1014px;" width="14" height="14" viewBox="0 0 14 14"><rect x="0.6" y="0.6" width="12.8" height="12.8" fill="none" stroke="#f0f0f0" stroke-width="1.1"/><path d="M4.6 0.6V7H9.4V0.6 M0.6 7H4.6" fill="none" stroke="#f0f0f0" stroke-width="1"/></svg>
<div style="left:1745px;top:1021px;width:8px;height:1px;background:#e0e0e0;"></div>
<div style="left:1758px;top:1021px;width:101px;height:1px;background:#cfcfcf;"></div>
<div style="left:1806px;top:1016px;width:5px;height:11px;background:#b8b8b8;"></div>
<svg style="left:1863px;top:1017px;" width="9" height="9" viewBox="0 0 9 9"><path d="M4.5 0.5V8.5 M0.5 4.5H8.5" stroke="#e0e0e0" stroke-width="1"/></svg>
<span class="t" style="left:1885.00px;top:1013.50px;font-size:11.5px;line-height:16px;color:#eeeeee;transform:scaleX(0.9118);transform-origin:0 50%;">98%</span>
<div style="left:0px;top:1032px;width:1920px;height:48px;background:linear-gradient(90deg,#1f2326 0%,#202427 40%,#1f2426 70%,#1c2426 100%);border-top:1px solid #3b3e40;"></div>
<svg style="left:18px;top:1040px;" width="32" height="26" viewBox="0 0 32 26"><defs><linearGradient id="cl" x1="0" y1="0" x2="0" y2="1"><stop offset="0" stop-color="#d9e3f6"/><stop offset="1" stop-color="#9fb6e6"/></linearGradient></defs>
<path d="M5.5 22.5 a5 5 0 0 1 0.6-10 a7.4 7.4 0 0 1 13.6-2.2 a6.2 6.2 0 0 1 0.8 12.2Z" fill="url(#cl)"/>
<circle cx="20.4" cy="6.6" r="7.2" fill="#f5a0a6"/></svg>
<span class="t" style="left:35.20px;top:1038.80px;font-size:11.5px;line-height:16px;color:#b3121b;">3</span>
<span class="t" style="left:50.50px;top:1039.00px;font-size:12.5px;line-height:18px;color:#ffffff;transform:scaleX(0.8949);transform-origin:0 50%;">28°C</span>
<span class="t" style="left:50.50px;top:1055.00px;font-size:12.5px;line-height:18px;color:#d8d8d8;transform:scaleX(0.9120);transform-origin:0 50%;">Berawan</span>
<svg style="left:573px;top:1044px;" width="24" height="24" viewBox="0 0 24 24"><defs><linearGradient id="wn" x1="0" y1="0" x2="1" y2="1"><stop offset="0" stop-color="#6fd0ff"/><stop offset="1" stop-color="#1b9de8"/></linearGradient></defs>
<rect x="0" y="0" width="11.4" height="11.4" rx="1" fill="url(#wn)"/><rect x="12.6" y="0" width="11.4" height="11.4" rx="1" fill="url(#wn)"/><rect x="0" y="12.6" width="11.4" height="11.4" rx="1" fill="url(#wn)"/><rect x="12.6" y="12.6" width="11.4" height="11.4" rx="1" fill="url(#wn)"/></svg>
<div style="left:609px;top:1040px;width:220px;height:32px;background:#3c3d41;border-radius:16px;border:1px solid #4a4b4f;"></div>
<svg style="left:620px;top:1048px;" width="18" height="18" viewBox="0 0 18 18"><circle cx="7.4" cy="7.4" r="5.6" fill="none" stroke="#f0f0f0" stroke-width="1.7"/><path d="M11.6 11.6 L15.6 15.6" stroke="#f0f0f0" stroke-width="1.9" stroke-linecap="round"/></svg>
<span class="t" style="left:646.00px;top:1046.30px;font-size:14px;line-height:20px;color:#e6e6e6;transform:scaleX(0.9243);transform-origin:0 50%;">Search</span>
<svg style="left:779px;top:1040px;" width="46" height="31" viewBox="0 0 46 31"><ellipse cx="23" cy="26.600" rx="21.500" ry="2.700" fill="#e9d6b3"/>
<path d="M4.500 9.500 L7.500 4 L9 1.500 L10.500 4.500 C13 6.500 14.500 9 15 10.500 C20 10 26 10 30.500 11.500 C33.500 12.800 34 16 33 19 L33.400 26 L31.400 26 L30.400 20 L28.600 20 L28 26 L26 26 L25.400 19.500 C21.500 19.800 18.500 19.200 16.500 18 L16.200 26 L14.200 26 L13.600 18.500 L11.800 15.500 L10 12 L6 13.200 L4 12Z" fill="#d9d3e6"/>
<path d="M9.500 3 L12.500 8.500 L14.500 11 L14 17 M17 10.500 L16.800 18 M19.800 10.200 L20.200 19 M22.800 10.400 L23.600 19.200 M25.800 10.800 L27 19 M28.800 11.400 L30.400 18.500 M31.500 12.800 L33.200 17 M7 6 L9.500 9" stroke="#4b3f6b" stroke-width="1.150" fill="none"/>
<path d="M33 14 L35.200 18.500" stroke="#4b3f6b" stroke-width="1.300"/></svg>
<svg style="left:842px;top:1044px;" width="24" height="24" viewBox="0 0 24 24"><rect x="0.5" y="7" width="15" height="15" rx="2" fill="#7b7b7d"/><rect x="6.5" y="1" width="16.5" height="16" rx="2" fill="#f1f1f1"/><rect x="6.5" y="7" width="9" height="10" fill="#c9c9cb"/></svg>
<svg style="left:884px;top:1044px;" width="26" height="24" viewBox="0 0 26 24"><path d="M1 3a2 2 0 0 1 2-2h6l3 3h11a2 2 0 0 1 2 2v14a2 2 0 0 1-2 2H3a2 2 0 0 1-2-2z" fill="#f7b52c"/><path d="M1 8h24v12a2 2 0 0 1-2 2H3a2 2 0 0 1-2-2z" fill="#ffd75e"/><rect x="7.5" y="15" width="11" height="7" rx="1.5" fill="#1b78d0"/><rect x="7.5" y="15" width="11" height="2.6" rx="1" fill="#3d97ea"/></svg>
<div style="left:894px;top:1072.5px;width:6px;height:2.5px;background:#8a8a8a;border-radius:1.5px;"></div>
<svg style="left:929px;top:1044px;" width="25" height="25" viewBox="0 0 25 25"><defs><linearGradient id="eg" x1="0" y1="1" x2="1" y2="0"><stop offset="0" stop-color="#0b4f9e"/><stop offset="0.450" stop-color="#1f8fd6"/><stop offset="1" stop-color="#4fd98a"/></linearGradient></defs>
<circle cx="12.500" cy="12.500" r="12" fill="url(#eg)"/>
<path d="M24.300 10.500 C24.500 14 22 16.200 18.500 16.200 H12.500 C12.500 13.500 10.500 12 8.500 12.500 C6 13.200 5.200 16 6.400 18.800 C3.500 17.500 1.500 14.500 2.200 10.500 C5 4 14 2.500 19.500 5.800 C22 7.200 23.800 8.500 24.300 10.500Z" fill="#3dc7c0" opacity="0.550"/>
<path d="M8.200 13.200 C7 17 9.500 21 14.500 21.600 C17.500 22 20.500 21 22.500 19 C20 24 13 26 7.500 22.800 C3.500 20.200 3.500 15 8.200 13.200Z" fill="#0a4a98"/>
<ellipse cx="13.200" cy="14" rx="3.600" ry="3.200" fill="#1f2326"/></svg>
<svg style="left:973px;top:1043px;" width="25" height="26" viewBox="0 0 25 26"><path d="M8 6V4a2.2 2.2 0 0 1 2.2-2.2h4.6A2.2 2.2 0 0 1 17 4v2" fill="none" stroke="#2aa0e8" stroke-width="2.2"/><rect x="1" y="6" width="23" height="19" rx="3" fill="#f4f4f4"/><rect x="7.5" y="10.5" width="4.4" height="4.4" fill="#f25022"/><rect x="13" y="10.5" width="4.4" height="4.4" fill="#7fba00"/><rect x="7.5" y="16" width="4.4" height="4.4" fill="#00a4ef"/><rect x="13" y="16" width="4.4" height="4.4" fill="#ffb900"/></svg>
<svg style="left:1016px;top:1040px;" width="34" height="30" viewBox="0 0 34 30"><path d="M13 4.5a11 11 0 1 1-5.6 20.4L2 26.5l1.7-5.2A11 11 0 0 1 13 4.5z" fill="#25c45a"/><path d="M13 7.3a8.3 8.3 0 1 1-4.4 15.3l-3 0.9 1-2.9A8.3 8.3 0 0 1 13 7.3z" fill="#1f2326"/><path d="M9.4 11.2c.5-1 1.6-.9 2 .1l.6 1.5c.2.5-.6 1.2-.7 1.5.7 1.5 1.9 2.6 3.5 3.3.4-.2 1-1 1.5-.8l1.6.7c.9.4.8 1.500-.1 2.100-3.600 2.200-10.600-4.400-8.400-8.400z" fill="#25c45a"/><circle cx="22" cy="7" r="7" fill="#42aef2"/></svg>
<span class="t" style="left:1035.14px;top:1039.70px;font-size:11px;line-height:15px;color:#ffffff;">1</span>
<div style="left:1026px;top:1072.5px;width:6px;height:2.5px;background:#8a8a8a;border-radius:1.5px;"></div>
<svg style="left:1060px;top:1040px;" width="34" height="30" viewBox="0 0 34 30"><circle cx="13" cy="16" r="12" fill="#e33b2e"/><path d="M13 16 L2.6 10 A12 12 0 0 0 13 28 Z" fill="#2ba24c"/><path d="M13 16 L13 28 A12 12 0 0 0 23.400 10 Z" fill="#fbc116"/><path d="M2.6 10 A12 12 0 0 1 23.400 10 L13 10Z" fill="#e33b2e"/><circle cx="13" cy="16" r="5.600" fill="#f4f4f4"/><circle cx="13" cy="16" r="4.400" fill="#3f7de0"/><circle cx="22" cy="6.800" r="6.600" fill="#6b4a3a"/></svg>
<span class="t" style="left:1079.58px;top:1039.10px;font-size:10.5px;line-height:15px;color:#ffffff;">k</span>
<div style="left:1070px;top:1072.5px;width:6px;height:2.5px;background:#8a8a8a;border-radius:1.5px;"></div>
<svg style="left:1104px;top:1043px;" width="28" height="28" viewBox="0 0 28 28"><rect x="1" y="1" width="18" height="18" rx="2.500" fill="#f6f6f6"/><rect x="5.500" y="7" width="10" height="9" fill="none" stroke="#d44a1c" stroke-width="1.600" stroke-dasharray="2.200 1.600"/><path d="M3.500 4h12" stroke="#d44a1c" stroke-width="2.200" stroke-dasharray="2.200 1.600"/><path d="M15.500 9 L16.600 20.500 M13 15.500 L24 17" stroke="#b9bcc2" stroke-width="2"/><circle cx="16.400" cy="23.600" r="2.400" fill="none" stroke="#2aa0e8" stroke-width="1.600"/><circle cx="24.600" cy="15.600" r="2.400" fill="none" stroke="#2aa0e8" stroke-width="1.600"/></svg>
<svg style="left:1152px;top:1043px;" width="20" height="26" viewBox="0 0 20 26"><rect x="0.500" y="0.500" width="19" height="25" rx="2" fill="#5b6673"/><rect x="2" y="2" width="16" height="5.500" fill="#49b6ea"/><g fill="#c9ced6"><rect x="2" y="9" width="4.600" height="4.400"/><rect x="7.700" y="9" width="4.600" height="4.400"/><rect x="2" y="14.400" width="4.600" height="4.400"/><rect x="7.700" y="14.400" width="4.600" height="4.400"/><rect x="2" y="19.800" width="4.600" height="4.400"/><rect x="7.700" y="19.800" width="4.600" height="4.400"/></g><rect x="13.400" y="9" width="4.600" height="4.400" fill="#c9ced6"/><rect x="13.400" y="14.400" width="4.600" height="9.800" fill="#1d4f91"/></svg>
<svg style="left:1195px;top:1043px;" width="22" height="26" viewBox="0 0 22 26"><rect x="1" y="2" width="19.500" height="22.500" rx="1.500" fill="#35b9ec"/><rect x="1" y="22.600" width="19.500" height="1.900" fill="#d9792a"/><path d="M3.500 1.600v2.600M6.900 1.600v2.600M10.300 1.600v2.600M13.700 1.600v2.600M17.100 1.600v2.600" stroke="#9fe0fa" stroke-width="1.300"/><path d="M4 9h13.500M4 12.600h13.500M4 16.200h13.500M4 19.600h13.500" stroke="#0f6ea6" stroke-width="1.700"/></svg>
<svg style="left:1237px;top:1044px;" width="26" height="26" viewBox="0 0 26 26"><circle cx="13" cy="13" r="12.500" fill="#e8344e"/><path d="M7.500 19 L13 7 L18.500 19" fill="none" stroke="#ffffff" stroke-width="2.300" stroke-linejoin="miter"/></svg>
<div style="left:1246px;top:1072.5px;width:6px;height:2.5px;background:#8a8a8a;border-radius:1.5px;"></div>
<div style="left:1273px;top:1036px;width:39px;height:41px;background:#272b2f;border-radius:5px;border:1px solid #34383c;"></div>
<svg style="left:1280px;top:1044px;" width="23" height="24" viewBox="0 0 23 24"><defs><linearGradient id="xg2" x1="0" y1="0" x2="1" y2="1"><stop offset="0" stop-color="#62cf5e"/><stop offset="1" stop-color="#0d6a2d"/></linearGradient></defs>
<rect x="4" y="0.500" width="18.500" height="22.500" rx="3.200" fill="url(#xg2)"/><rect x="4" y="0.500" width="18.500" height="7" rx="3" fill="#7fd86c"/><rect x="13" y="7.500" width="9.500" height="7.500" fill="#2a9a45"/><path d="M13.200 0.500v7" stroke="#58b95a" stroke-width="0.800"/>
<rect x="0" y="8" width="12" height="12" rx="2.400" fill="#107c41"/><path d="M3.600 11.200 L8.400 16.800 M8.400 11.200 L3.600 16.800" stroke="#fff" stroke-width="1.800"/></svg>
<div style="left:1285px;top:1072.5px;width:16px;height:3px;background:#48b2f0;border-radius:1.5px;"></div>
<svg style="left:1325px;top:1046px;" width="26" height="20" viewBox="0 0 26 20"><rect x="0.500" y="0.500" width="25" height="19" rx="2" fill="#3a3a3c"/><rect x="0.500" y="0.500" width="25" height="3.500" fill="#5a5a5c"/><path d="M4 7.500 L8.500 11 L4 14.500" fill="none" stroke="#f2f2f2" stroke-width="1.800"/><path d="M10.500 15h6" stroke="#f2f2f2" stroke-width="1.800"/></svg>
<div style="left:1334px;top:1072.5px;width:6px;height:2.5px;background:#8a8a8a;border-radius:1.5px;"></div>
<svg style="left:1696px;top:1051px;" width="12" height="8" viewBox="0 0 12 8"><path d="M1 6.800 L6 1.600 L11 6.800" fill="none" stroke="#f2f2f2" stroke-width="1.600" stroke-linecap="round" stroke-linejoin="round"/></svg>
<svg style="left:1724px;top:1048px;" width="20" height="16" viewBox="0 0 20 16"><path d="M4.600 13.500a3.600 3.600 0 0 1 .3-7.200 5 5 0 0 1 9.400-.8 4 4 0 0 1 .5 8z" fill="#8f9194"/><path d="M3 1.500 L16.500 15" stroke="#d8d8d8" stroke-width="1.200"/></svg>
<svg style="left:1758px;top:1048px;" width="18" height="18" viewBox="0 0 18 18"><rect x="0.700" y="0.700" width="11.600" height="10.600" rx="1" fill="none" stroke="#f2f2f2" stroke-width="1.200"/><path d="M6.500 11.500V15 M3.500 15.300H10" stroke="#f2f2f2" stroke-width="1.200"/><rect x="12.300" y="0.700" width="3.600" height="5" rx="0.800" fill="#1f2326" stroke="#f2f2f2" stroke-width="1.100"/><path d="M14.100 5.700V15.500" stroke="#f2f2f2" stroke-width="1.200"/></svg>
<svg style="left:1782px;top:1049px;" width="18" height="15" viewBox="0 0 18 15"><path d="M1 5h2.800L8 1.200V13.800L3.800 10H1z" fill="none" stroke="#f2f2f2" stroke-width="1.200" stroke-linejoin="round"/><path d="M10.400 4.800a4 4 0 0 1 0 5.400 M12.600 2.800a7 7 0 0 1 0 9.400 M14.800 1a10 10 0 0 1 0 13" fill="none" stroke="#f2f2f2" stroke-width="1.200" stroke-linecap="round"/></svg>
<span class="t" style="left:1845.72px;top:1039.00px;font-size:12.5px;line-height:18px;color:#ffffff;transform:scaleX(0.9271);transform-origin:100% 50%;">10:59</span>
<span class="t" style="left:1814.44px;top:1055.00px;font-size:12.5px;line-height:18px;color:#ffffff;transform:scaleX(0.9910);transform-origin:100% 50%;">31/01/2026</span>
<svg style="left:1885px;top:1048px;" width="16" height="17" viewBox="0 0 16 17"><path d="M7.500 1.500a4.600 4.600 0 0 0-4.600 4.600v3.400L1.200 12.500h12.600l-1.700-3V6.100A4.600 4.600 0 0 0 7.500 1.500z" fill="#f2f2f2"/><path d="M5.600 14a2 2 0 0 0 3.800 0z" fill="#f2f2f2"/><path d="M10.800 1h3.400l-3.400 4h3.400" fill="none" stroke="#f2f2f2" stroke-width="1.100"/><path d="M6 6.200h2.600L6 9.200h2.600" fill="none" stroke="#1f2326" stroke-width="0.900"/></svg>
</body></html>
